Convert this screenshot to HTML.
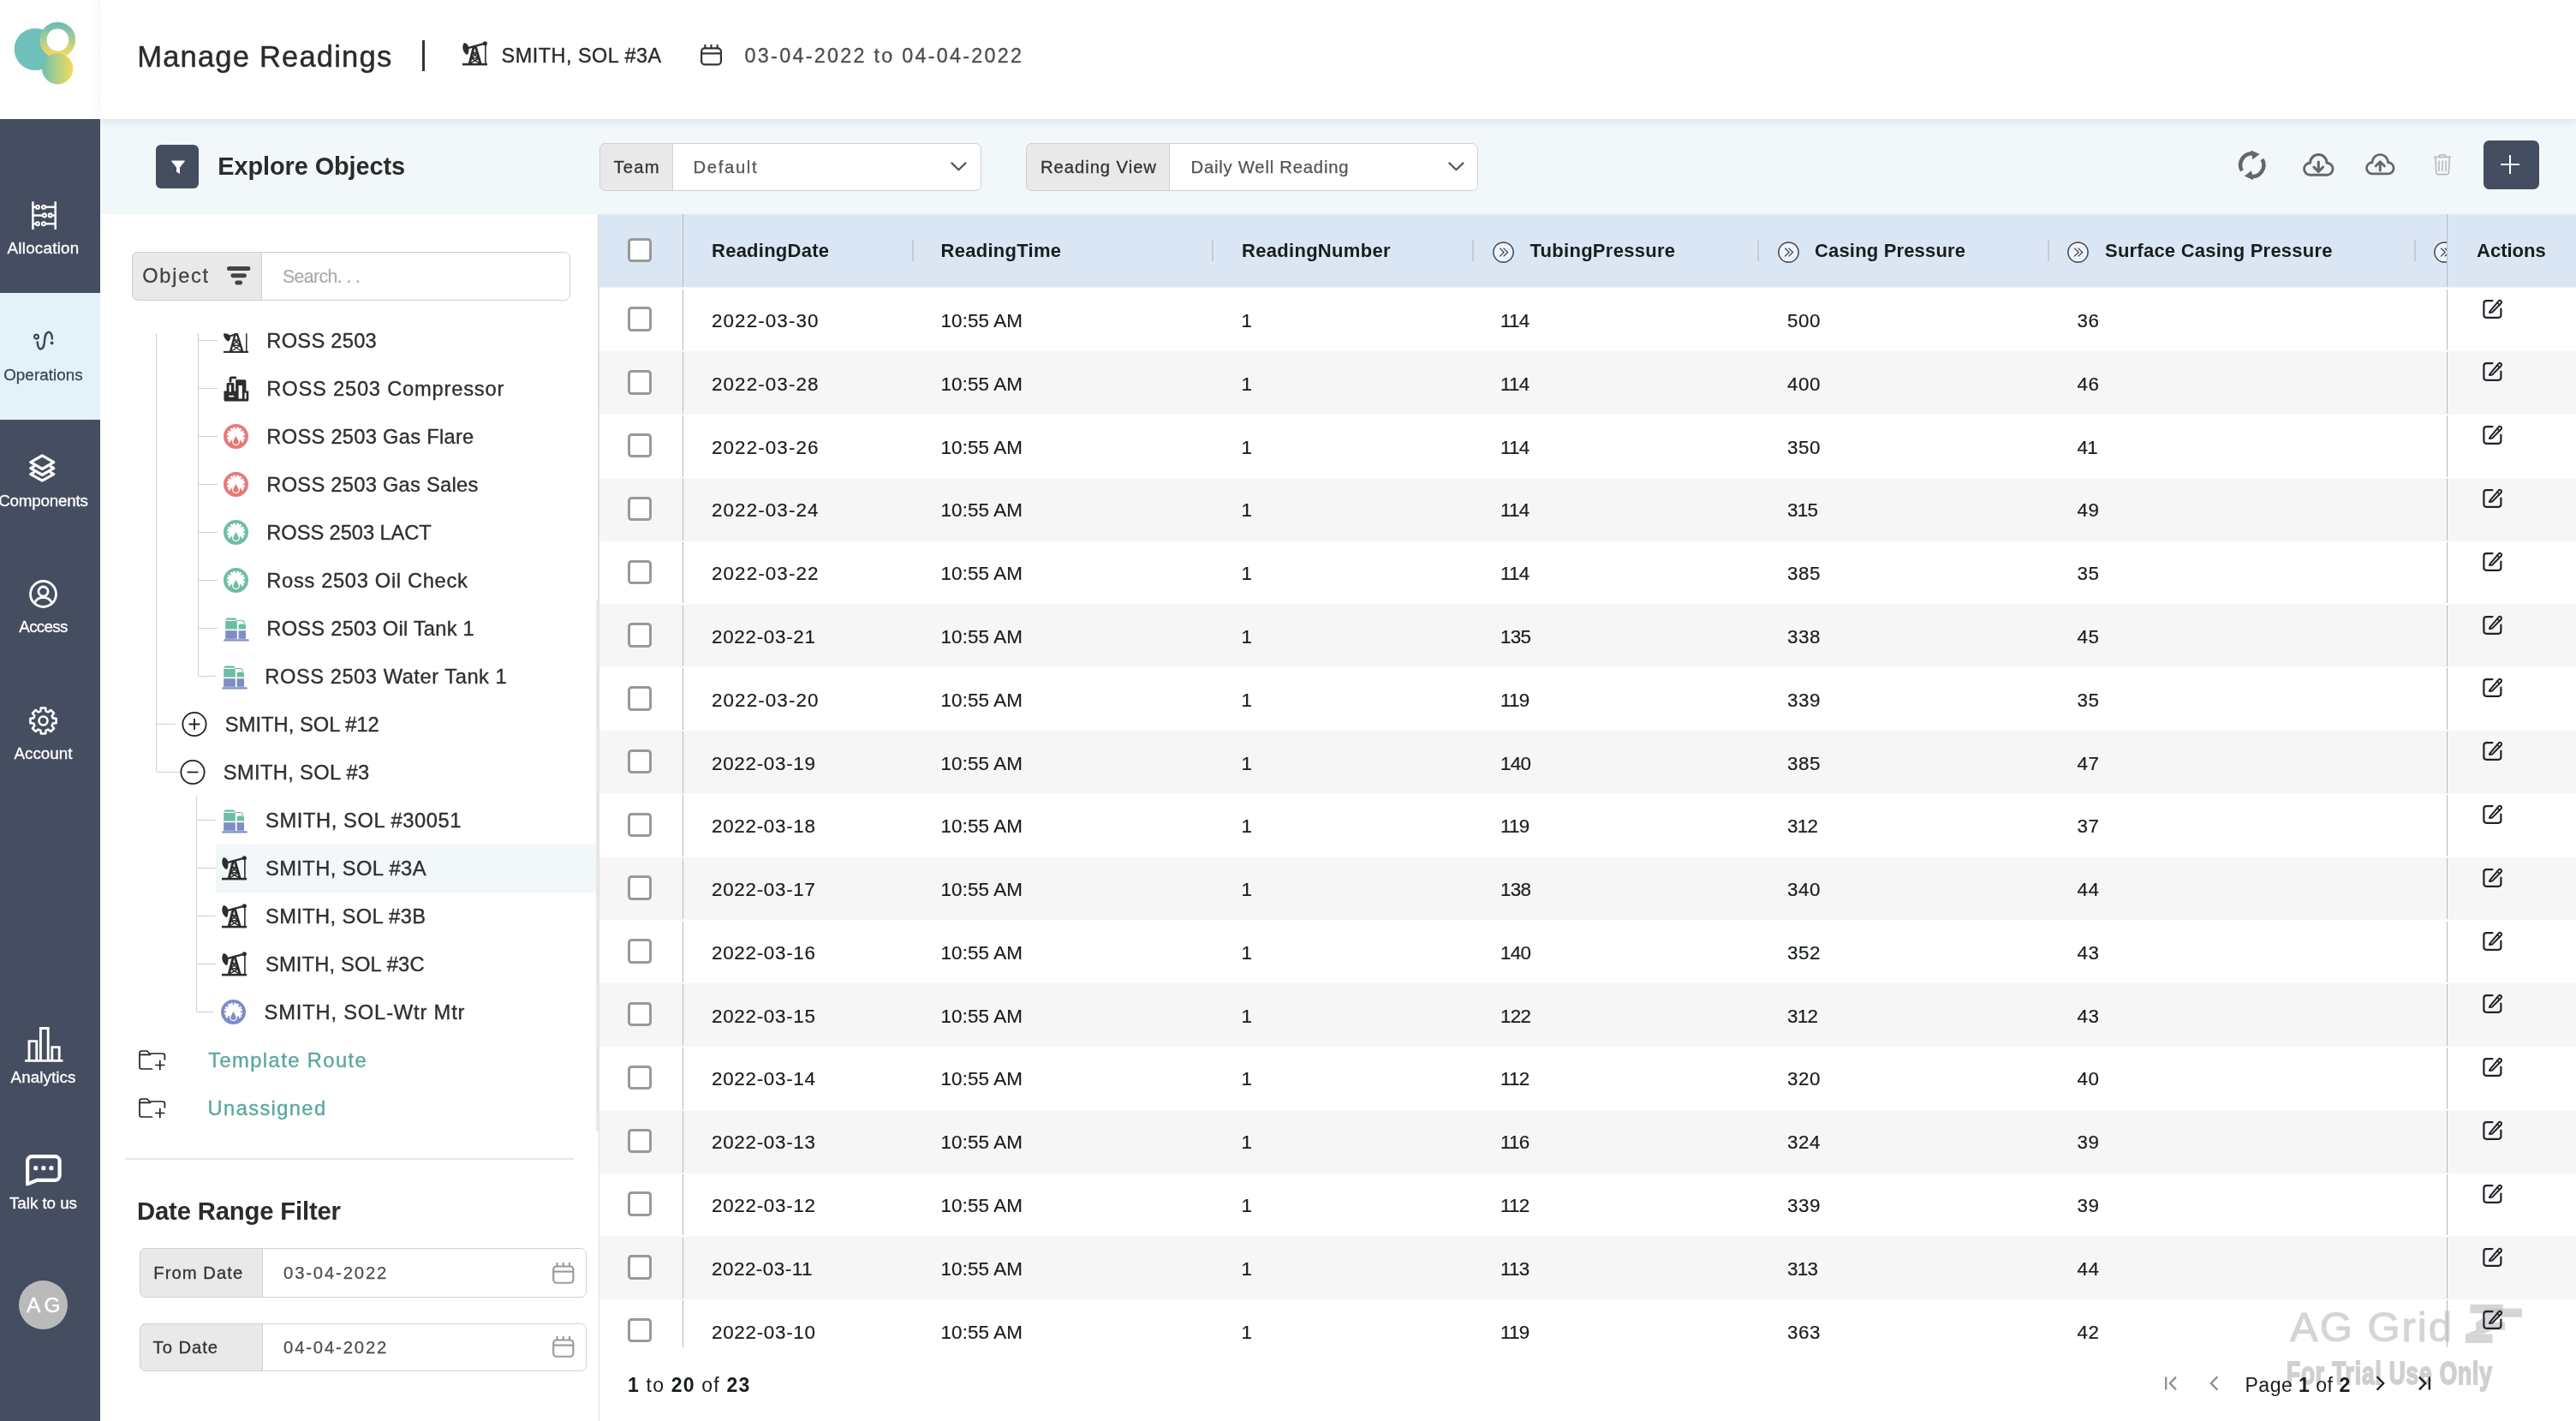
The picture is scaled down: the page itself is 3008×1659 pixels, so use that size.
<!DOCTYPE html>
<html><head><meta charset="utf-8"><title>Manage Readings</title>
<style>
html,body{margin:0;padding:0;background:#fff}
body{width:3008px;height:1659px;position:relative;overflow:hidden;font-family:"Liberation Sans",sans-serif}
.t{position:absolute;white-space:nowrap;font-family:"Liberation Sans",sans-serif}
.b{position:absolute}
#root{position:absolute;left:0;top:0;width:3008px;height:1659px;will-change:transform}
</style></head><body><div id="root">
<div class="b" style="left:0px;top:0px;width:3008px;height:1659px;background:#fff;"></div>
<div class="b" style="left:117px;top:139px;width:2891px;height:110.6px;background:#f2f7fa;"></div>
<div class="b" style="left:117px;top:0px;width:2891px;height:139px;background:#fff;box-shadow:0 3px 9px rgba(70,85,100,.125);"></div>
<div class="b" style="left:117px;top:249.6px;width:581px;height:1409.4px;background:#fff;"></div>
<div class="b" style="left:0px;top:139px;width:117px;height:1520px;background:#454d60;"></div>
<div class="b" style="left:0px;top:0px;width:117px;height:139px;background:linear-gradient(90deg,#fff 0,#fff 91%,#f9f9f9 100%);"></div>
<div class="b" style="left:0px;top:342.1px;width:117px;height:147.8px;background:#e3f2f9;"></div>
<svg style="position:absolute;left:0;top:0" width="117" height="139" viewBox="0 0 117 139"><defs><linearGradient id="lg1" x1="0" y1="0" x2="0" y2="1"><stop offset="0" stop-color="#6fc0b4"/><stop offset=".45" stop-color="#a5cc94"/><stop offset="1" stop-color="#f3da5e"/></linearGradient><linearGradient id="lg2" x1="0" y1="0" x2="1" y2="0"><stop offset="0" stop-color="#6fc0b0"/><stop offset=".5" stop-color="#b3cf88"/><stop offset="1" stop-color="#f5da5a"/></linearGradient></defs><circle cx="41.3" cy="57.5" r="24.6" fill="#70c0bb"/><circle cx="67.3" cy="46.6" r="16.9" fill="none" stroke="url(#lg1)" stroke-width="8"/><circle cx="67.3" cy="46.6" r="12.9" fill="#fff"/><circle cx="67.2" cy="80.3" r="18.1" fill="url(#lg2)"/></svg>
<span id="t1" class="t" style="left:160.20px;top:49.31px;font-size:34.6px;line-height:34.6px;color:#2b2b2b;letter-spacing:1.166px;-webkit-text-stroke:0.45px #2b2b2b;">Manage Readings</span>
<div class="b" style="left:493px;top:46.7px;width:3px;height:36.2px;background:#333;"></div>
<svg style="position:absolute;left:540.1px;top:48.4px;overflow:visible" width="29" height="28.5" viewBox="0 0 29 28.5" ><g fill="none" stroke="#2d2d2d"><path d="M0 27.1H29" stroke-width="2.6"/><path d="M26.9 3V27" stroke-width="1.6"/><path d="M4.5 8.6L26.5 2.7" stroke-width="2.4"/><path d="M8.2 26.6L13.2 6.6H15.4L21.2 26.6" stroke-width="2.9" stroke-linejoin="miter"/><path d="M11.6 13.6H17.4M10.2 19.8H19.2M11.6 13.6L19.2 19.8M17.4 13.6L10.2 19.8M10.2 19.8L20.4 26.2M19.2 19.8L9 26.2" stroke-width="1.5"/></g><circle cx="26.4" cy="2.7" r="2.5" fill="#2d2d2d"/><path d="M2 2C4.6 2.2 6.6 4 7.2 6.8C7.8 9.6 7.4 12.4 6.8 14.8L5 16C2.2 14 0.2 10.8 0.3 7.2C0.4 4.8 1 3.2 2 2Z" fill="#2d2d2d"/></svg>
<span id="t2" class="t" style="left:585.60px;top:53.59px;font-size:23.4px;line-height:23.4px;color:#2a2a2a;letter-spacing:0.513px;-webkit-text-stroke:0.35px #2a2a2a;">SMITH, SOL #3A</span>
<svg style="position:absolute;left:817.6px;top:52.2px;overflow:visible" width="25" height="24.5" viewBox="0 0 25 24.5" ><g fill="none" stroke="#333" stroke-width="2.2" stroke-linecap="round"><rect x="1.1" y="4.4" width="22.8" height="19" rx="3.6"/><path d="M1.1 10.4H23.9" stroke-linecap="butt"/><path d="M5.4 .9V4M12.5 .9V4M19.6 .9V4"/></g></svg>
<span id="t3" class="t" style="left:869.60px;top:53.59px;font-size:23.4px;line-height:23.4px;color:#4d4d4d;letter-spacing:2.247px;-webkit-text-stroke:0.3px #4d4d4d;">03-04-2022 to 04-04-2022</span>
<svg style="position:absolute;left:37px;top:234.7px;overflow:visible" width="29" height="33" viewBox="0 0 29 33" ><g fill="none" stroke="#fff" stroke-width="2.5"><path d="M1.4 .2V33.1M27.7 .2V33.1"/><path d="M1.4 6.8H4M17 6.8H27.7M1.4 16.4H12M24.6 16.4H27.7M1.4 26.2H4M17 26.2H27.7"/><g stroke-width="2.1"><circle cx="6.9" cy="6.8" r="2"/><circle cx="14" cy="6.8" r="2"/><circle cx="14.9" cy="16.4" r="2"/><circle cx="21.7" cy="16.4" r="2"/><circle cx="6.9" cy="26.2" r="2"/><circle cx="14" cy="26.2" r="2"/></g></g></svg>
<span id="t4" class="t" style="left:50.50px;top:281.29px;font-size:18.8px;line-height:18.8px;color:#fff;letter-spacing:0.240px;transform:translateX(-50%);-webkit-text-stroke:0.3px #fff;">Allocation</span>
<svg style="position:absolute;left:39px;top:386px;overflow:visible" width="24" height="23" viewBox="0 0 24 23" ><g fill="none" stroke="#3c4559" stroke-width="2.4" stroke-linecap="butt"><circle cx="3.5" cy="7.1" r="2.45" stroke-width="2.2"/><path d="M4.7 12.4C4.4 24.6 12.4 24.6 13 12C13.6 -1.5 22.2 -1.5 22 10.6"/></g><circle cx="21.6" cy="14.4" r="1.9" fill="#3c4559"/></svg>
<span id="t5" class="t" style="left:50.50px;top:428.69px;font-size:18.8px;line-height:18.8px;color:#3c4559;letter-spacing:0.081px;transform:translateX(-50%);-webkit-text-stroke:0.3px #3c4559;">Operations</span>
<svg style="position:absolute;left:33.9px;top:529.9px;overflow:visible" width="30.6" height="33" viewBox="0 0 30.6 33" ><g fill="none" stroke="#fff" stroke-width="3.2" stroke-linejoin="round" stroke-linecap="round"><path d="M15.3 1.8L28.8 9.6L15.3 17.5L1.8 9.6Z"/><path d="M5.4 14.7L1.8 16.7L15.3 24.5L28.8 16.7L25.2 14.7"/><path d="M5.4 21.7L1.8 23.7L15.3 31.2L28.8 23.7L25.2 21.7"/></g></svg>
<span id="t6" class="t" style="left:50.50px;top:575.79px;font-size:18.8px;line-height:18.8px;color:#fff;letter-spacing:-0.200px;transform:translateX(-50%);-webkit-text-stroke:0.3px #fff;">Components</span>
<svg style="position:absolute;left:34.2px;top:677.2px;overflow:visible" width="33" height="33" viewBox="0 0 33 33" ><g fill="none" stroke="#fff" stroke-width="2.8"><circle cx="16.5" cy="16.5" r="15"/><circle cx="16.5" cy="13.6" r="5.6"/><path d="M6.2 27.2C8.2 22.6 12 20.6 16.5 20.6S24.8 22.6 26.8 27.2" stroke-linecap="round"/></g></svg>
<span id="t7" class="t" style="left:50.50px;top:723.29px;font-size:18.8px;line-height:18.8px;color:#fff;letter-spacing:-0.700px;transform:translateX(-50%);-webkit-text-stroke:0.3px #fff;">Access</span>
<svg style="position:absolute;left:34.2px;top:825px;overflow:visible" width="33" height="33" viewBox="0 0 33 33" ><g fill="none" stroke="#fff" stroke-width="2.6" stroke-linejoin="round"><path d="M27.66 13.35 L31.57 13.87 L31.57 19.13 L27.66 19.65 L26.62 22.17 L29.02 25.30 L25.30 29.02 L22.17 26.62 L19.65 27.66 L19.13 31.57 L13.87 31.57 L13.35 27.66 L10.83 26.62 L7.70 29.02 L3.98 25.30 L6.38 22.17 L5.34 19.65 L1.43 19.13 L1.43 13.87 L5.34 13.35 L6.38 10.83 L3.98 7.70 L7.70 3.98 L10.83 6.38 L13.35 5.34 L13.87 1.43 L19.13 1.43 L19.65 5.34 L22.17 6.38 L25.30 3.98 L29.02 7.70 L26.62 10.83Z"/><circle cx="16.5" cy="16.5" r="5"/></g></svg>
<span id="t8" class="t" style="left:50.50px;top:870.79px;font-size:18.8px;line-height:18.8px;color:#fff;letter-spacing:0.004px;transform:translateX(-50%);-webkit-text-stroke:0.3px #fff;">Account</span>
<svg style="position:absolute;left:28.6px;top:1199.4px;overflow:visible" width="44.5" height="41" viewBox="0 0 44.5 41" ><g fill="none" stroke="#fff" stroke-width="2.9"><path d="M0 39.4H44.5"/><path d="M5 39.4V16.6H13.8V39.4M18.4 39.4V1.5H27.2V39.4M31.8 39.4V23.6H40.2V39.4"/></g></svg>
<span id="t9" class="t" style="left:50.50px;top:1248.99px;font-size:18.8px;line-height:18.8px;color:#fff;letter-spacing:0.080px;transform:translateX(-50%);-webkit-text-stroke:0.3px #fff;">Analytics</span>
<svg style="position:absolute;left:30px;top:1348px;overflow:visible" width="42" height="37" viewBox="0 0 42 37" ><path d="M7.5 2.1H34.2a5.4 5.4 0 0 1 5.4 5.4V24.4a5.4 5.4 0 0 1 -5.4 5.4H13.6L2.1 34.4V7.5a5.4 5.4 0 0 1 5.4-5.4Z" fill="none" stroke="#fff" stroke-width="4.2" stroke-linejoin="round"/><circle cx="11.7" cy="15.7" r="2.6" fill="#fff"/><circle cx="20.8" cy="15.7" r="2.6" fill="#fff"/><circle cx="29.9" cy="15.7" r="2.6" fill="#fff"/></svg>
<span id="t10" class="t" style="left:50.50px;top:1395.79px;font-size:18.8px;line-height:18.8px;color:#fff;letter-spacing:-0.038px;transform:translateX(-50%);-webkit-text-stroke:0.3px #fff;">Talk to us</span>
<div class="b" style="left:22px;top:1495.2px;width:57.2px;height:57.2px;background:#bababa;border-radius:50%;"></div>
<span id="t11" class="t" style="left:50.50px;top:1511.98px;font-size:24.6px;line-height:24.6px;color:#fff;letter-spacing:-0.700px;transform:translateX(-50%);-webkit-text-stroke:0.4px #fff;">A G</span>
<div class="b" style="left:182px;top:169.2px;width:50px;height:50.8px;background:#454d60;border-radius:6px;"></div>
<svg style="position:absolute;left:200.2px;top:187px;overflow:visible" width="16" height="16.4" viewBox="0 0 16 16.4" ><path d="M.6 .4H15.4a.5 .5 0 0 1 .4.8L10 8.6V16L6 13.6V8.6L.2 1.2A.5 .5 0 0 1 .6 .4Z" fill="#fff"/></svg>
<span id="t12" class="t" style="left:254.20px;top:179.94px;font-size:28.9px;line-height:28.9px;color:#2b2b2b;font-weight:700;letter-spacing:-0.069px;">Explore Objects</span>
<div class="b" style="left:700px;top:166.5px;width:445.5px;height:56px;background:#fff;border:1px solid #cfd2d6;border-radius:7px;box-sizing:border-box;"></div>
<div class="b" style="left:700px;top:166.5px;width:85.5px;height:56px;background:#e9e9e9;border:1px solid #cfd2d6;border-radius:7px 0 0 7px;box-sizing:border-box;"></div>
<span id="t13" class="t" style="left:716.60px;top:184.62px;font-size:20.3px;line-height:20.3px;color:#333;letter-spacing:1.135px;-webkit-text-stroke:0.3px #333;">Team</span>
<span id="t14" class="t" style="left:809.60px;top:184.62px;font-size:20.3px;line-height:20.3px;color:#555;letter-spacing:1.622px;-webkit-text-stroke:0.25px #555;">Default</span>
<svg style="position:absolute;left:1110.3px;top:189.2px;overflow:visible" width="18.8" height="10.8" viewBox="0 0 21 12" ><path d="M1.5 1.5L10.5 10.3L19.5 1.5" fill="none" stroke="#555" stroke-width="2.4" stroke-linecap="round" stroke-linejoin="round"/></svg>
<div class="b" style="left:1197.5px;top:166.5px;width:528px;height:56px;background:#fff;border:1px solid #cfd2d6;border-radius:7px;box-sizing:border-box;"></div>
<div class="b" style="left:1197.5px;top:166.5px;width:168px;height:56px;background:#e9e9e9;border:1px solid #cfd2d6;border-radius:7px 0 0 7px;box-sizing:border-box;"></div>
<span id="t15" class="t" style="left:1215.00px;top:184.62px;font-size:20.3px;line-height:20.3px;color:#333;letter-spacing:0.929px;-webkit-text-stroke:0.3px #333;">Reading View</span>
<span id="t16" class="t" style="left:1390.50px;top:184.62px;font-size:20.3px;line-height:20.3px;color:#555;letter-spacing:0.767px;-webkit-text-stroke:0.25px #555;">Daily Well Reading</span>
<svg style="position:absolute;left:1690.6px;top:189.2px;overflow:visible" width="18.8" height="10.8" viewBox="0 0 21 12" ><path d="M1.5 1.5L10.5 10.3L19.5 1.5" fill="none" stroke="#555" stroke-width="2.4" stroke-linecap="round" stroke-linejoin="round"/></svg>
<svg style="position:absolute;left:2614.2px;top:175.1px;overflow:visible" width="31.4" height="35.4" viewBox="0 0 31.4 35.4" ><g fill="none" stroke="#666" stroke-width="4.5"><path d="M3.9 24.4A13.4 13.4 0 0 1 17.6 4.5"/><path d="M27.5 10.9A13.4 13.4 0 0 1 13.8 30.9"/></g><path d="M14.2 .2L24.6 5L16.4 11.2Z" fill="#666"/><path d="M17.2 35.2L6.8 30.4L15 24.2Z" fill="#666"/></svg>
<svg style="position:absolute;left:2689px;top:179.1px;overflow:visible" width="36.6" height="26.8" viewBox="0 0 36.6 26.8" ><g fill="none" stroke="#666" stroke-width="2.9" stroke-linecap="round" stroke-linejoin="round"><path d="M8.55 25.25A7 7 0 0 1 8.55 11.25A9.75 9.75 0 0 1 28.05 11.25A7 7 0 0 1 28.05 25.25Z"/><path d="M18.3 10V20.8M13 16.2L18.3 21.5L23.6 16.2" stroke-width="3.1"/></g></svg>
<svg style="position:absolute;left:2762.2px;top:178.6px;overflow:visible" width="34.6" height="25.5" viewBox="0 0 36.6 26.8" ><g fill="none" stroke="#666" stroke-width="2.9" stroke-linecap="round" stroke-linejoin="round"><path d="M8.55 25.25A7 7 0 0 1 8.55 11.25A9.75 9.75 0 0 1 28.05 11.25A7 7 0 0 1 28.05 25.25Z"/><path d="M18.3 21.4V10.8M13 15.6L18.3 10.3L23.6 15.6" stroke-width="3.1"/></g></svg>
<svg style="position:absolute;left:2841.8px;top:180.1px;overflow:visible" width="20.2" height="24.4" viewBox="0 0 20.2 24.4" ><g fill="none" stroke="#b8b8b8" stroke-width="1.6"><path d="M0 3.4H20.2"/><path d="M6.4 3.2V1.6A.9 .9 0 0 1 7.3 .7H12.9A.9 .9 0 0 1 13.8 1.6V3.2"/><path d="M1.9 3.6L2.8 22A1.8 1.8 0 0 0 4.6 23.6H15.6A1.8 1.8 0 0 0 17.4 22L18.3 3.6"/><path d="M6 7.4V20M10.1 7.4V20M14.2 7.4V20" stroke-width="1.5"/></g></svg>
<div class="b" style="left:2900px;top:164px;width:65.2px;height:56.8px;background:#454d60;border-radius:6.5px;"></div>
<div class="b" style="left:2920px;top:190.9px;width:22.4px;height:2.4px;background:#fff;"></div>
<div class="b" style="left:2930px;top:180.9px;width:2.4px;height:22.4px;background:#fff;"></div>
<div class="b" style="left:153.5px;top:293.5px;width:512.2px;height:57px;background:#fff;border:1px solid #cfcfcf;border-radius:7px;box-sizing:border-box;"></div>
<div class="b" style="left:153.5px;top:293.5px;width:152.2px;height:57px;background:#e9e9e9;border:1px solid #cfcfcf;border-radius:7px 0 0 7px;box-sizing:border-box;"></div>
<span id="t17" class="t" style="left:166.20px;top:311.22px;font-size:23.6px;line-height:23.6px;color:#444;letter-spacing:1.759px;-webkit-text-stroke:0.3px #444;">Object</span>
<svg style="position:absolute;left:265.4px;top:311.3px;overflow:visible" width="27.4" height="21.4" viewBox="0 0 27.4 21.4" ><g fill="#444"><rect x="0" y="0" width="27.4" height="5" rx="2.5"/><rect x="4.4" y="8.2" width="18.6" height="5" rx="2.5"/><rect x="9.4" y="16.4" width="8.6" height="5" rx="2.2"/></g></svg>
<span id="t18" class="t" style="left:330.00px;top:312.77px;font-size:21.3px;line-height:21.3px;color:#aaa;letter-spacing:-0.608px;-webkit-text-stroke:0.2px #aaa;">Search. . .</span>
<div class="b" style="left:252px;top:986.1px;width:444.5px;height:56.2px;background:#f2f7fa;"></div>
<div class="b" style="left:181.9px;top:389px;width:1.2px;height:512.4px;background:#d0d0d0;"></div>
<div class="b" style="left:230.9px;top:389px;width:1.2px;height:400.4px;background:#d0d0d0;"></div>
<div class="b" style="left:231.5px;top:396.79999999999995px;width:22.30000000000001px;height:1.2px;background:#d0d0d0;"></div>
<svg style="position:absolute;left:260.9px;top:388.79999999999995px;overflow:visible" width="29" height="23" viewBox="0 0 29 23" ><g fill="none" stroke="#2d2d2d" stroke-linecap="butt"><path d="M0 21.9H29" stroke-width="2.1"/><path d="M26.8 0.3V22" stroke-width="1.5"/><path d="M8 21.6L13.6 1.2H16L22.2 21.6" stroke-width="2.4" stroke-linejoin="miter"/><path d="M12 7.8H17.8M10.4 14.2H19.8M12 7.8L19.8 14.2M17.8 7.8L10.4 14.2M10.4 14.2L21.4 21.2M19.8 14.2L8.6 21.2" stroke-width="1.35"/><path d="M4.6 4.2L15.4 0.9" stroke-width="2.1"/></g><path d="M0.1 0.4C3.6 0 6.6 1 7.6 3.2C8.5 5.2 8 7.2 6.6 8.6L5.4 9.8L2.6 7.2C0.9 5.4 0.1 3 0.1 0.4Z" fill="#2d2d2d"/></svg>
<span id="t19" class="t" style="left:311.30px;top:386.64px;font-size:23.7px;line-height:23.7px;color:#2f2f2f;letter-spacing:0.260px;-webkit-text-stroke:0.35px #2f2f2f;">ROSS 2503</span>
<div class="b" style="left:231.5px;top:452.79999999999995px;width:22.30000000000001px;height:1.2px;background:#d0d0d0;"></div>
<svg style="position:absolute;left:260.8px;top:438.7px;overflow:visible" width="29.5" height="29.5" viewBox="0 0 29.5 29.5" ><g fill="#2d2d2d"><path d="M0.5 17.6H3.6V9.2a1.2 1.2 0 0 1 1.2-1.2H11.2a1.2 1.2 0 0 1 1.2 1.2V17.6H29.3V28a1.4 1.4 0 0 1 -1.4 1.4H1.9A1.4 1.4 0 0 1 .5 28Z"/><path d="M14.2 4.2H24.6a1.8 1.8 0 0 1 1.8 1.8V18H14.2a0 0 0 0 1 0 0V4.2Z"/><path d="M6.6 7.6V3.4A3 3 0 0 1 9.6 .4H14a1 1 0 0 1 1 1V3.2H10.2a.8 .8 0 0 0 -.8.8V7.6Z"/></g><g fill="#fff"><rect x="6.6" y="10.5" width="2.3" height="8"/><rect x="17.6" y="11" width="4.2" height="15.5"/><rect x="24.6" y="19.6" width="2" height="7"/><rect x="6" y="22.8" width="6.4" height="1.6" rx=".8"/></g></svg>
<span id="t20" class="t" style="left:311.30px;top:442.64px;font-size:23.7px;line-height:23.7px;color:#2f2f2f;letter-spacing:0.789px;-webkit-text-stroke:0.35px #2f2f2f;">ROSS 2503 Compressor</span>
<div class="b" style="left:231.5px;top:508.79999999999995px;width:22.30000000000001px;height:1.2px;background:#d0d0d0;"></div>
<svg style="position:absolute;left:261.0px;top:494.9px;overflow:visible" width="29" height="29" viewBox="0 0 29 29" ><circle cx="14.5" cy="14.5" r="14.45" fill="#e87878"/><circle cx="14.5" cy="14.3" r="10.7" fill="#fff"/><path d="M3.30 14.30L6.10 14.30" stroke="#e87878" stroke-width="1.7"/><path d="M6.58 6.38L8.56 8.36" stroke="#e87878" stroke-width="1.7"/><path d="M14.50 3.10L14.50 5.90" stroke="#e87878" stroke-width="1.7"/><path d="M22.42 6.38L20.44 8.36" stroke="#e87878" stroke-width="1.7"/><path d="M25.70 14.30L22.90 14.30" stroke="#e87878" stroke-width="1.7"/><path d="M4.15 10.01L5.54 10.59" stroke="#e87878" stroke-width="1.3"/><path d="M10.21 3.95L10.79 5.34" stroke="#e87878" stroke-width="1.3"/><path d="M18.79 3.95L18.21 5.34" stroke="#e87878" stroke-width="1.3"/><path d="M24.85 10.01L23.46 10.59" stroke="#e87878" stroke-width="1.3"/><path d="M4.15 18.59L5.54 18.01" stroke="#e87878" stroke-width="1.3"/><path d="M24.85 18.59L23.46 18.01" stroke="#e87878" stroke-width="1.3"/><path d="M6.6 24L8.3 19.7L9.2 18.9L10 19.4L10.4 20.8H18.6L19 19.4L19.8 18.9L20.7 19.7L22.4 24L14.5 27Z" fill="#e87878"/><path d="M10.55 20.6A3.95 3.95 0 0 0 18.45 20.6" fill="none" stroke="#fff" stroke-width="1.25"/><path d="M14.5 14C15.7 16.4 17.45 18.5 17.45 20.5A2.95 2.95 0 0 1 11.55 20.5C11.55 18.5 13.3 16.4 14.5 14Z" fill="#e87878"/></svg>
<span id="t21" class="t" style="left:311.30px;top:498.64px;font-size:23.7px;line-height:23.7px;color:#2f2f2f;letter-spacing:0.279px;-webkit-text-stroke:0.35px #2f2f2f;">ROSS 2503 Gas Flare</span>
<div class="b" style="left:231.5px;top:564.8px;width:22.30000000000001px;height:1.2px;background:#d0d0d0;"></div>
<svg style="position:absolute;left:261.0px;top:550.9px;overflow:visible" width="29" height="29" viewBox="0 0 29 29" ><circle cx="14.5" cy="14.5" r="14.45" fill="#e87878"/><circle cx="14.5" cy="14.3" r="10.7" fill="#fff"/><path d="M3.30 14.30L6.10 14.30" stroke="#e87878" stroke-width="1.7"/><path d="M6.58 6.38L8.56 8.36" stroke="#e87878" stroke-width="1.7"/><path d="M14.50 3.10L14.50 5.90" stroke="#e87878" stroke-width="1.7"/><path d="M22.42 6.38L20.44 8.36" stroke="#e87878" stroke-width="1.7"/><path d="M25.70 14.30L22.90 14.30" stroke="#e87878" stroke-width="1.7"/><path d="M4.15 10.01L5.54 10.59" stroke="#e87878" stroke-width="1.3"/><path d="M10.21 3.95L10.79 5.34" stroke="#e87878" stroke-width="1.3"/><path d="M18.79 3.95L18.21 5.34" stroke="#e87878" stroke-width="1.3"/><path d="M24.85 10.01L23.46 10.59" stroke="#e87878" stroke-width="1.3"/><path d="M4.15 18.59L5.54 18.01" stroke="#e87878" stroke-width="1.3"/><path d="M24.85 18.59L23.46 18.01" stroke="#e87878" stroke-width="1.3"/><path d="M6.6 24L8.3 19.7L9.2 18.9L10 19.4L10.4 20.8H18.6L19 19.4L19.8 18.9L20.7 19.7L22.4 24L14.5 27Z" fill="#e87878"/><path d="M10.55 20.6A3.95 3.95 0 0 0 18.45 20.6" fill="none" stroke="#fff" stroke-width="1.25"/><path d="M14.5 14C15.7 16.4 17.45 18.5 17.45 20.5A2.95 2.95 0 0 1 11.55 20.5C11.55 18.5 13.3 16.4 14.5 14Z" fill="#e87878"/></svg>
<span id="t22" class="t" style="left:311.30px;top:554.64px;font-size:23.7px;line-height:23.7px;color:#2f2f2f;letter-spacing:0.263px;-webkit-text-stroke:0.35px #2f2f2f;">ROSS 2503 Gas Sales</span>
<div class="b" style="left:231.5px;top:620.8px;width:22.30000000000001px;height:1.2px;background:#d0d0d0;"></div>
<svg style="position:absolute;left:261.0px;top:606.9px;overflow:visible" width="29" height="29" viewBox="0 0 29 29" ><circle cx="14.5" cy="14.5" r="14.45" fill="#6dbda4"/><circle cx="14.5" cy="14.3" r="10.7" fill="#fff"/><path d="M3.30 14.30L6.10 14.30" stroke="#6dbda4" stroke-width="1.7"/><path d="M6.58 6.38L8.56 8.36" stroke="#6dbda4" stroke-width="1.7"/><path d="M14.50 3.10L14.50 5.90" stroke="#6dbda4" stroke-width="1.7"/><path d="M22.42 6.38L20.44 8.36" stroke="#6dbda4" stroke-width="1.7"/><path d="M25.70 14.30L22.90 14.30" stroke="#6dbda4" stroke-width="1.7"/><path d="M4.15 10.01L5.54 10.59" stroke="#6dbda4" stroke-width="1.3"/><path d="M10.21 3.95L10.79 5.34" stroke="#6dbda4" stroke-width="1.3"/><path d="M18.79 3.95L18.21 5.34" stroke="#6dbda4" stroke-width="1.3"/><path d="M24.85 10.01L23.46 10.59" stroke="#6dbda4" stroke-width="1.3"/><path d="M4.15 18.59L5.54 18.01" stroke="#6dbda4" stroke-width="1.3"/><path d="M24.85 18.59L23.46 18.01" stroke="#6dbda4" stroke-width="1.3"/><path d="M6.6 24L8.3 19.7L9.2 18.9L10 19.4L10.4 20.8H18.6L19 19.4L19.8 18.9L20.7 19.7L22.4 24L14.5 27Z" fill="#6dbda4"/><path d="M10.55 20.6A3.95 3.95 0 0 0 18.45 20.6" fill="none" stroke="#fff" stroke-width="1.25"/><path d="M14.5 14C15.7 16.4 17.45 18.5 17.45 20.5A2.95 2.95 0 0 1 11.55 20.5C11.55 18.5 13.3 16.4 14.5 14Z" fill="#6dbda4"/></svg>
<span id="t23" class="t" style="left:311.30px;top:610.64px;font-size:23.7px;line-height:23.7px;color:#2f2f2f;letter-spacing:-0.081px;-webkit-text-stroke:0.35px #2f2f2f;">ROSS 2503 LACT</span>
<div class="b" style="left:231.5px;top:676.8px;width:22.30000000000001px;height:1.2px;background:#d0d0d0;"></div>
<svg style="position:absolute;left:261.0px;top:662.9px;overflow:visible" width="29" height="29" viewBox="0 0 29 29" ><circle cx="14.5" cy="14.5" r="14.45" fill="#6dbda4"/><circle cx="14.5" cy="14.3" r="10.7" fill="#fff"/><path d="M3.30 14.30L6.10 14.30" stroke="#6dbda4" stroke-width="1.7"/><path d="M6.58 6.38L8.56 8.36" stroke="#6dbda4" stroke-width="1.7"/><path d="M14.50 3.10L14.50 5.90" stroke="#6dbda4" stroke-width="1.7"/><path d="M22.42 6.38L20.44 8.36" stroke="#6dbda4" stroke-width="1.7"/><path d="M25.70 14.30L22.90 14.30" stroke="#6dbda4" stroke-width="1.7"/><path d="M4.15 10.01L5.54 10.59" stroke="#6dbda4" stroke-width="1.3"/><path d="M10.21 3.95L10.79 5.34" stroke="#6dbda4" stroke-width="1.3"/><path d="M18.79 3.95L18.21 5.34" stroke="#6dbda4" stroke-width="1.3"/><path d="M24.85 10.01L23.46 10.59" stroke="#6dbda4" stroke-width="1.3"/><path d="M4.15 18.59L5.54 18.01" stroke="#6dbda4" stroke-width="1.3"/><path d="M24.85 18.59L23.46 18.01" stroke="#6dbda4" stroke-width="1.3"/><path d="M6.6 24L8.3 19.7L9.2 18.9L10 19.4L10.4 20.8H18.6L19 19.4L19.8 18.9L20.7 19.7L22.4 24L14.5 27Z" fill="#6dbda4"/><path d="M10.55 20.6A3.95 3.95 0 0 0 18.45 20.6" fill="none" stroke="#fff" stroke-width="1.25"/><path d="M14.5 14C15.7 16.4 17.45 18.5 17.45 20.5A2.95 2.95 0 0 1 11.55 20.5C11.55 18.5 13.3 16.4 14.5 14Z" fill="#6dbda4"/></svg>
<span id="t24" class="t" style="left:311.30px;top:666.64px;font-size:23.7px;line-height:23.7px;color:#2f2f2f;letter-spacing:0.667px;-webkit-text-stroke:0.35px #2f2f2f;">Ross 2503 Oil Check</span>
<div class="b" style="left:231.5px;top:732.8px;width:22.30000000000001px;height:1.2px;background:#d0d0d0;"></div>
<svg style="position:absolute;left:260.5px;top:720.9px;overflow:visible" width="30" height="27.5" viewBox="0 0 30 27.5" ><g fill="#6dbda4"><path d="M2.6 2.2a1.8 1.8 0 0 1 1.8-1.8H13.4a1.8 1.8 0 0 1 1.8 1.8V2.8H2.6Z"/><rect x="2.2" y="4" width="13.6" height="9.6"/><path d="M17.6 13.6V9.4a2 2 0 0 1 2-2H24a2 2 0 0 1 2 2V13.6Z"/><path d="M15.2 3H21.5a3.2 3.2 0 0 1 3.2 3.2V7.6H23.6V6.2a2.1 2.1 0 0 0 -2.1-2.1H15.2Z"/></g><g fill="#7f8dc6"><rect x="2.2" y="15.2" width="13.6" height="9.6"/><rect x="17.6" y="15.2" width="8.4" height="9.6"/><path d="M.2 26.6a1.4 1.4 0 0 1 1.4-1.4H28.4a1.4 1.4 0 0 1 1.4 1.4V27.4H.2Z"/></g></svg>
<span id="t25" class="t" style="left:311.30px;top:722.64px;font-size:23.7px;line-height:23.7px;color:#2f2f2f;letter-spacing:0.243px;-webkit-text-stroke:0.35px #2f2f2f;">ROSS 2503 Oil Tank 1</span>
<div class="b" style="left:231.5px;top:788.8px;width:20.30000000000001px;height:1.2px;background:#d0d0d0;"></div>
<svg style="position:absolute;left:258.5px;top:776.9px;overflow:visible" width="30" height="27.5" viewBox="0 0 30 27.5" ><g fill="#6dbda4"><path d="M2.6 2.2a1.8 1.8 0 0 1 1.8-1.8H13.4a1.8 1.8 0 0 1 1.8 1.8V2.8H2.6Z"/><rect x="2.2" y="4" width="13.6" height="9.6"/><path d="M17.6 13.6V9.4a2 2 0 0 1 2-2H24a2 2 0 0 1 2 2V13.6Z"/><path d="M15.2 3H21.5a3.2 3.2 0 0 1 3.2 3.2V7.6H23.6V6.2a2.1 2.1 0 0 0 -2.1-2.1H15.2Z"/></g><g fill="#7f8dc6"><rect x="2.2" y="15.2" width="13.6" height="9.6"/><rect x="17.6" y="15.2" width="8.4" height="9.6"/><path d="M.2 26.6a1.4 1.4 0 0 1 1.4-1.4H28.4a1.4 1.4 0 0 1 1.4 1.4V27.4H.2Z"/></g></svg>
<span id="t26" class="t" style="left:309.30px;top:778.64px;font-size:23.7px;line-height:23.7px;color:#2f2f2f;letter-spacing:0.536px;-webkit-text-stroke:0.35px #2f2f2f;">ROSS 2503 Water Tank 1</span>
<div class="b" style="left:182.5px;top:844.8px;width:22.5px;height:1.2px;background:#d0d0d0;"></div>
<svg style="position:absolute;left:211.5px;top:830.4px;overflow:visible" width="30" height="30" viewBox="0 0 30 30" ><circle cx="15" cy="15.5" r="13.65" fill="#fff" stroke="#222" stroke-width="1.8"/><path d="M8.6 15.5H21.4M15 9.1V21.9" stroke="#222" stroke-width="1.8" fill="none"/></svg>
<span id="t27" class="t" style="left:262.80px;top:834.64px;font-size:23.7px;line-height:23.7px;color:#2f2f2f;letter-spacing:0.040px;-webkit-text-stroke:0.35px #2f2f2f;">SMITH, SOL #12</span>
<div class="b" style="left:182.5px;top:900.8px;width:28.5px;height:1.2px;background:#d0d0d0;"></div>
<svg style="position:absolute;left:210.2px;top:886.4px;overflow:visible" width="30" height="30" viewBox="0 0 30 30" ><circle cx="15" cy="15.5" r="13.65" fill="#fff" stroke="#222" stroke-width="1.8"/><path d="M8.6 15.5H21.4" stroke="#222" stroke-width="1.8" fill="none"/></svg>
<span id="t28" class="t" style="left:260.80px;top:890.64px;font-size:23.7px;line-height:23.7px;color:#2f2f2f;letter-spacing:0.349px;-webkit-text-stroke:0.35px #2f2f2f;">SMITH, SOL #3</span>
<div class="b" style="left:228.9px;top:930px;width:1.2px;height:251.4000000000001px;background:#d0d0d0;"></div>
<div class="b" style="left:229.5px;top:956.8px;width:22.30000000000001px;height:1.2px;background:#d0d0d0;"></div>
<svg style="position:absolute;left:258.5px;top:944.9px;overflow:visible" width="30" height="27.5" viewBox="0 0 30 27.5" ><g fill="#6dbda4"><path d="M2.6 2.2a1.8 1.8 0 0 1 1.8-1.8H13.4a1.8 1.8 0 0 1 1.8 1.8V2.8H2.6Z"/><rect x="2.2" y="4" width="13.6" height="9.6"/><path d="M17.6 13.6V9.4a2 2 0 0 1 2-2H24a2 2 0 0 1 2 2V13.6Z"/><path d="M15.2 3H21.5a3.2 3.2 0 0 1 3.2 3.2V7.6H23.6V6.2a2.1 2.1 0 0 0 -2.1-2.1H15.2Z"/></g><g fill="#7f8dc6"><rect x="2.2" y="15.2" width="13.6" height="9.6"/><rect x="17.6" y="15.2" width="8.4" height="9.6"/><path d="M.2 26.6a1.4 1.4 0 0 1 1.4-1.4H28.4a1.4 1.4 0 0 1 1.4 1.4V27.4H.2Z"/></g></svg>
<span id="t29" class="t" style="left:310.00px;top:946.64px;font-size:23.7px;line-height:23.7px;color:#2f2f2f;letter-spacing:0.594px;-webkit-text-stroke:0.35px #2f2f2f;">SMITH, SOL #30051</span>
<div class="b" style="left:229.5px;top:1012.8px;width:22.30000000000001px;height:1.2px;background:#d0d0d0;"></div>
<svg style="position:absolute;left:259.0px;top:998.8px;overflow:visible" width="29" height="28.5" viewBox="0 0 29 28.5" ><g fill="none" stroke="#2d2d2d"><path d="M0 27.1H29" stroke-width="2.6"/><path d="M26.9 3V27" stroke-width="1.6"/><path d="M4.5 8.6L26.5 2.7" stroke-width="2.4"/><path d="M8.2 26.6L13.2 6.6H15.4L21.2 26.6" stroke-width="2.9" stroke-linejoin="miter"/><path d="M11.6 13.6H17.4M10.2 19.8H19.2M11.6 13.6L19.2 19.8M17.4 13.6L10.2 19.8M10.2 19.8L20.4 26.2M19.2 19.8L9 26.2" stroke-width="1.5"/></g><circle cx="26.4" cy="2.7" r="2.5" fill="#2d2d2d"/><path d="M2 2C4.6 2.2 6.6 4 7.2 6.8C7.8 9.6 7.4 12.4 6.8 14.8L5 16C2.2 14 0.2 10.8 0.3 7.2C0.4 4.8 1 3.2 2 2Z" fill="#2d2d2d"/></svg>
<span id="t30" class="t" style="left:310.00px;top:1002.64px;font-size:23.7px;line-height:23.7px;color:#2f2f2f;letter-spacing:0.415px;-webkit-text-stroke:0.35px #2f2f2f;">SMITH, SOL #3A</span>
<div class="b" style="left:229.5px;top:1068.8000000000002px;width:22.30000000000001px;height:1.2px;background:#d0d0d0;"></div>
<svg style="position:absolute;left:259.0px;top:1054.8000000000002px;overflow:visible" width="29" height="28.5" viewBox="0 0 29 28.5" ><g fill="none" stroke="#2d2d2d"><path d="M0 27.1H29" stroke-width="2.6"/><path d="M26.9 3V27" stroke-width="1.6"/><path d="M4.5 8.6L26.5 2.7" stroke-width="2.4"/><path d="M8.2 26.6L13.2 6.6H15.4L21.2 26.6" stroke-width="2.9" stroke-linejoin="miter"/><path d="M11.6 13.6H17.4M10.2 19.8H19.2M11.6 13.6L19.2 19.8M17.4 13.6L10.2 19.8M10.2 19.8L20.4 26.2M19.2 19.8L9 26.2" stroke-width="1.5"/></g><circle cx="26.4" cy="2.7" r="2.5" fill="#2d2d2d"/><path d="M2 2C4.6 2.2 6.6 4 7.2 6.8C7.8 9.6 7.4 12.4 6.8 14.8L5 16C2.2 14 0.2 10.8 0.3 7.2C0.4 4.8 1 3.2 2 2Z" fill="#2d2d2d"/></svg>
<span id="t31" class="t" style="left:310.00px;top:1058.64px;font-size:23.7px;line-height:23.7px;color:#2f2f2f;letter-spacing:0.376px;-webkit-text-stroke:0.35px #2f2f2f;">SMITH, SOL #3B</span>
<div class="b" style="left:229.5px;top:1124.8000000000002px;width:22.30000000000001px;height:1.2px;background:#d0d0d0;"></div>
<svg style="position:absolute;left:259.0px;top:1110.8000000000002px;overflow:visible" width="29" height="28.5" viewBox="0 0 29 28.5" ><g fill="none" stroke="#2d2d2d"><path d="M0 27.1H29" stroke-width="2.6"/><path d="M26.9 3V27" stroke-width="1.6"/><path d="M4.5 8.6L26.5 2.7" stroke-width="2.4"/><path d="M8.2 26.6L13.2 6.6H15.4L21.2 26.6" stroke-width="2.9" stroke-linejoin="miter"/><path d="M11.6 13.6H17.4M10.2 19.8H19.2M11.6 13.6L19.2 19.8M17.4 13.6L10.2 19.8M10.2 19.8L20.4 26.2M19.2 19.8L9 26.2" stroke-width="1.5"/></g><circle cx="26.4" cy="2.7" r="2.5" fill="#2d2d2d"/><path d="M2 2C4.6 2.2 6.6 4 7.2 6.8C7.8 9.6 7.4 12.4 6.8 14.8L5 16C2.2 14 0.2 10.8 0.3 7.2C0.4 4.8 1 3.2 2 2Z" fill="#2d2d2d"/></svg>
<span id="t32" class="t" style="left:310.00px;top:1114.64px;font-size:23.7px;line-height:23.7px;color:#2f2f2f;letter-spacing:0.161px;-webkit-text-stroke:0.35px #2f2f2f;">SMITH, SOL #3C</span>
<div class="b" style="left:229.5px;top:1180.8000000000002px;width:20.80000000000001px;height:1.2px;background:#d0d0d0;"></div>
<svg style="position:absolute;left:257.5px;top:1166.9px;overflow:visible" width="29" height="29" viewBox="0 0 29 29" ><circle cx="14.5" cy="14.5" r="14.45" fill="#7d8bc9"/><circle cx="14.5" cy="14.3" r="10.7" fill="#fff"/><path d="M3.30 14.30L6.10 14.30" stroke="#7d8bc9" stroke-width="1.7"/><path d="M6.58 6.38L8.56 8.36" stroke="#7d8bc9" stroke-width="1.7"/><path d="M14.50 3.10L14.50 5.90" stroke="#7d8bc9" stroke-width="1.7"/><path d="M22.42 6.38L20.44 8.36" stroke="#7d8bc9" stroke-width="1.7"/><path d="M25.70 14.30L22.90 14.30" stroke="#7d8bc9" stroke-width="1.7"/><path d="M4.15 10.01L5.54 10.59" stroke="#7d8bc9" stroke-width="1.3"/><path d="M10.21 3.95L10.79 5.34" stroke="#7d8bc9" stroke-width="1.3"/><path d="M18.79 3.95L18.21 5.34" stroke="#7d8bc9" stroke-width="1.3"/><path d="M24.85 10.01L23.46 10.59" stroke="#7d8bc9" stroke-width="1.3"/><path d="M4.15 18.59L5.54 18.01" stroke="#7d8bc9" stroke-width="1.3"/><path d="M24.85 18.59L23.46 18.01" stroke="#7d8bc9" stroke-width="1.3"/><path d="M6.6 24L8.3 19.7L9.2 18.9L10 19.4L10.4 20.8H18.6L19 19.4L19.8 18.9L20.7 19.7L22.4 24L14.5 27Z" fill="#7d8bc9"/><path d="M10.55 20.6A3.95 3.95 0 0 0 18.45 20.6" fill="none" stroke="#fff" stroke-width="1.25"/><path d="M14.5 14C15.7 16.4 17.45 18.5 17.45 20.5A2.95 2.95 0 0 1 11.55 20.5C11.55 18.5 13.3 16.4 14.5 14Z" fill="#7d8bc9"/></svg>
<span id="t33" class="t" style="left:308.50px;top:1170.64px;font-size:23.7px;line-height:23.7px;color:#2f2f2f;letter-spacing:0.838px;-webkit-text-stroke:0.35px #2f2f2f;">SMITH, SOL-Wtr Mtr</span>
<svg style="position:absolute;left:162px;top:1225.8000000000002px;overflow:visible" width="31" height="23.5" viewBox="0 0 31 23.5" ><g fill="none" stroke="#222" stroke-width="1.7" stroke-linejoin="round" stroke-linecap="round"><path d="M15.5 22H3.4A2.4 2.4 0 0 1 1 19.6V3.2A2.2 2.2 0 0 1 3.2 1H9.6L12.6 4H28.2A2.2 2.2 0 0 1 30.4 6.2V11"/><path d="M1 5.4H13.5"/><path d="M24.8 12.6V22.4M19.9 17.5H29.7"/></g></svg>
<span id="t34" class="t" style="left:243.20px;top:1226.64px;font-size:23.7px;line-height:23.7px;color:#5ba69f;letter-spacing:1.430px;-webkit-text-stroke:0.35px #5ba69f;">Template Route</span>
<svg style="position:absolute;left:162px;top:1281.8000000000002px;overflow:visible" width="31" height="23.5" viewBox="0 0 31 23.5" ><g fill="none" stroke="#222" stroke-width="1.7" stroke-linejoin="round" stroke-linecap="round"><path d="M15.5 22H3.4A2.4 2.4 0 0 1 1 19.6V3.2A2.2 2.2 0 0 1 3.2 1H9.6L12.6 4H28.2A2.2 2.2 0 0 1 30.4 6.2V11"/><path d="M1 5.4H13.5"/><path d="M24.8 12.6V22.4M19.9 17.5H29.7"/></g></svg>
<span id="t35" class="t" style="left:242.60px;top:1282.64px;font-size:23.7px;line-height:23.7px;color:#5ba69f;letter-spacing:1.377px;-webkit-text-stroke:0.35px #5ba69f;">Unassigned</span>
<div class="b" style="left:695.9px;top:699.9px;width:3.2px;height:620.9px;background:#e8e8e8;border-radius:2px 0 0 2px;"></div>
<div class="b" style="left:146px;top:1352.4px;width:524px;height:1.2px;background:#e6e6e6;"></div>
<span id="t36" class="t" style="left:160.00px;top:1398.80px;font-size:29.3px;line-height:29.3px;color:#2b2b2b;font-weight:700;letter-spacing:-0.185px;">Date Range Filter</span>
<div class="b" style="left:163.3px;top:1457.2px;width:521.5px;height:57.6px;background:#fff;border:1px solid #cfd2d6;border-radius:7px;box-sizing:border-box;"></div>
<div class="b" style="left:163.3px;top:1457.2px;width:143.7px;height:57.6px;background:#e9e9e9;border:1px solid #cfd2d6;border-radius:7px 0 0 7px;box-sizing:border-box;"></div>
<span id="t37" class="t" style="left:179.30px;top:1476.42px;font-size:20.3px;line-height:20.3px;color:#333;letter-spacing:1.025px;-webkit-text-stroke:0.3px #333;">From Date</span>
<span id="t38" class="t" style="left:331.00px;top:1476.42px;font-size:20.3px;line-height:20.3px;color:#4d4d4d;letter-spacing:1.850px;-webkit-text-stroke:0.25px #4d4d4d;">03-04-2022</span>
<svg style="position:absolute;left:645px;top:1474.1px;overflow:visible" width="25.6" height="24.9" viewBox="0 0 25 24.5" ><g fill="none" stroke="#9a9a9a" stroke-width="2.1" stroke-linecap="round"><rect x="1.1" y="4.4" width="22.8" height="19" rx="3.6"/><path d="M1.1 10.4H23.9" stroke-linecap="butt"/><path d="M5.4 .9V4M12.5 .9V4M19.6 .9V4"/></g></svg>
<div class="b" style="left:163.3px;top:1544.6px;width:521.5px;height:56.1px;background:#fff;border:1px solid #cfd2d6;border-radius:7px;box-sizing:border-box;"></div>
<div class="b" style="left:163.3px;top:1544.6px;width:143.7px;height:56.1px;background:#e9e9e9;border:1px solid #cfd2d6;border-radius:7px 0 0 7px;box-sizing:border-box;"></div>
<span id="t39" class="t" style="left:178.60px;top:1562.52px;font-size:20.3px;line-height:20.3px;color:#333;letter-spacing:0.916px;-webkit-text-stroke:0.3px #333;">To Date</span>
<span id="t40" class="t" style="left:331.00px;top:1562.52px;font-size:20.3px;line-height:20.3px;color:#4d4d4d;letter-spacing:1.850px;-webkit-text-stroke:0.25px #4d4d4d;">04-04-2022</span>
<svg style="position:absolute;left:645px;top:1560px;overflow:visible" width="25.6" height="24.9" viewBox="0 0 25 24.5" ><g fill="none" stroke="#9a9a9a" stroke-width="2.1" stroke-linecap="round"><rect x="1.1" y="4.4" width="22.8" height="19" rx="3.6"/><path d="M1.1 10.4H23.9" stroke-linecap="butt"/><path d="M5.4 .9V4M12.5 .9V4M19.6 .9V4"/></g></svg>
<div class="b" style="left:698px;top:249.6px;width:2px;height:450.4px;background:#dedede;"></div>
<div class="b" style="left:699px;top:700px;width:1px;height:959px;background:#e0e0e0;"></div>
<div class="b" style="left:700px;top:249.6px;width:2308px;height:86.9px;background:#dbe6f4;border-bottom:1.8px solid #edf2f9;box-sizing:border-box;"></div>
<div class="b" style="left:796.5px;top:249.6px;width:1.3px;height:85.9px;background:#b2b9c5;"></div>
<div class="b" style="left:2856.9px;top:249.6px;width:1.25px;height:85.9px;background:#b2b9c5;"></div>
<div class="b" style="left:733px;top:277.5px;width:28.4px;height:28.4px;background:#fff;border:3px solid #999;border-radius:4.5px;box-sizing:border-box;"></div>
<span id="t41" class="t" style="left:831.00px;top:282.08px;font-size:22px;line-height:22px;color:#181d1f;font-weight:700;letter-spacing:0.252px;">ReadingDate</span>
<span id="t42" class="t" style="left:1098.50px;top:282.08px;font-size:22px;line-height:22px;color:#181d1f;font-weight:700;letter-spacing:0.275px;">ReadingTime</span>
<span id="t43" class="t" style="left:1450.00px;top:282.08px;font-size:22px;line-height:22px;color:#181d1f;font-weight:700;letter-spacing:0.298px;">ReadingNumber</span>
<span id="t44" class="t" style="left:1786.50px;top:282.08px;font-size:22px;line-height:22px;color:#181d1f;font-weight:700;letter-spacing:0.280px;">TubingPressure</span>
<span id="t45" class="t" style="left:2119.00px;top:282.08px;font-size:22px;line-height:22px;color:#181d1f;font-weight:700;letter-spacing:0.169px;">Casing Pressure</span>
<span id="t46" class="t" style="left:2458.00px;top:282.08px;font-size:22px;line-height:22px;color:#181d1f;font-weight:700;letter-spacing:0.229px;">Surface Casing Pressure</span>
<div class="b" style="left:1064.5px;top:280px;width:2px;height:24.8px;background:#c5ccd7;"></div>
<div class="b" style="left:1415px;top:280px;width:2px;height:24.8px;background:#c5ccd7;"></div>
<div class="b" style="left:1719px;top:280px;width:2px;height:24.8px;background:#c5ccd7;"></div>
<div class="b" style="left:2052px;top:280px;width:2px;height:24.8px;background:#c5ccd7;"></div>
<div class="b" style="left:2390.5px;top:280px;width:2px;height:24.8px;background:#c5ccd7;"></div>
<div class="b" style="left:2819px;top:280px;width:2px;height:24.8px;background:#c5ccd7;"></div>
<svg style="position:absolute;left:1743.0px;top:281.8px;overflow:visible" width="25" height="25" viewBox="0 0 25 25" ><circle cx="12.5" cy="12.5" r="11.6" fill="#f1f5fa" stroke="#3b4658" stroke-width="1.5"/><path d="M8.2 7.6L13.1 12.5L8.2 17.4M12.6 7.6L17.5 12.5L12.6 17.4" fill="none" stroke="#3b4658" stroke-width="1.3"/></svg>
<svg style="position:absolute;left:2076.0px;top:281.8px;overflow:visible" width="25" height="25" viewBox="0 0 25 25" ><circle cx="12.5" cy="12.5" r="11.6" fill="#f1f5fa" stroke="#3b4658" stroke-width="1.5"/><path d="M8.2 7.6L13.1 12.5L8.2 17.4M12.6 7.6L17.5 12.5L12.6 17.4" fill="none" stroke="#3b4658" stroke-width="1.3"/></svg>
<svg style="position:absolute;left:2414.0px;top:281.8px;overflow:visible" width="25" height="25" viewBox="0 0 25 25" ><circle cx="12.5" cy="12.5" r="11.6" fill="#f1f5fa" stroke="#3b4658" stroke-width="1.5"/><path d="M8.2 7.6L13.1 12.5L8.2 17.4M12.6 7.6L17.5 12.5L12.6 17.4" fill="none" stroke="#3b4658" stroke-width="1.3"/></svg>
<div class="b" style="left:2836px;top:270px;width:20.8px;height:50px;overflow:hidden"><svg style="position:absolute;left:6.099999999999909px;top:11.800000000000011px;overflow:visible" width="25" height="25" viewBox="0 0 25 25" ><circle cx="12.5" cy="12.5" r="11.6" fill="#f1f5fa" stroke="#3b4658" stroke-width="1.5"/><path d="M8.2 7.6L13.1 12.5L8.2 17.4M12.6 7.6L17.5 12.5L12.6 17.4" fill="none" stroke="#3b4658" stroke-width="1.3"/></svg></div>
<span id="t47" class="t" style="left:2892.00px;top:282.08px;font-size:22px;line-height:22px;color:#181d1f;font-weight:700;letter-spacing:0.002px;">Actions</span>
<span class="t" style="left:2674px;top:1524.5px;font-size:49px;line-height:49px;color:#d5d5d5;letter-spacing:2px;-webkit-text-stroke:1.1px #d5d5d5">AG Grid</span>
<svg style="position:absolute;left:2879px;top:1522.5px" width="66" height="46" viewBox="0 0 66 46"><g fill="#d5d5d5"><rect x="5.4" y="0" width="38.4" height="10.2"/><rect x="22.8" y="4.7" width="43.2" height="10"/><rect x="12.3" y="20.5" width="33.8" height="9.4"/><rect x="0" y="34.5" width="31.5" height="10.4"/><path d="M22.8 14.7L12.3 20.5H30L40 14.7Z"/><path d="M12.3 29.9L0 34.5H20L31 29.9Z"/></g><rect x="22.8" y="4.7" width="21" height="5.5" fill="#c4c4c4"/></svg>
<span class="t" style="left:2670px;top:1586px;font-size:36px;line-height:36px;font-weight:700;color:#d0d0d0;-webkit-text-stroke:1.9px #d0d0d0;letter-spacing:1.2px;transform-origin:0 0;transform:scaleX(.73)">For Trial Use Only</span>
<div class="b" style="left:796.5px;top:337.7px;width:1.3px;height:71.58700000000003px;background:#b2b9c5;"></div>
<div class="b" style="left:2856.9px;top:337.7px;width:1.25px;height:71.58700000000003px;background:#b2b9c5;"></div>
<div class="b" style="left:733px;top:358.4px;width:28.4px;height:28.4px;background:#fff;border:3px solid #999;border-radius:4.5px;box-sizing:border-box;"></div>
<span id="t48" class="t" style="left:831.00px;top:363.99px;font-size:22.4px;line-height:22.4px;color:#181d1f;letter-spacing:1.106px;-webkit-text-stroke:0.2px #181d1f;">2022-03-30</span>
<span id="t49" class="t" style="left:1098.50px;top:363.99px;font-size:22.4px;line-height:22.4px;color:#181d1f;letter-spacing:0.127px;-webkit-text-stroke:0.2px #181d1f;">10:55 AM</span>
<span id="t50" class="t" style="left:1449.50px;top:363.99px;font-size:22.4px;line-height:22.4px;color:#181d1f;-webkit-text-stroke:0.2px #181d1f;">1</span>
<span id="t51" class="t" style="left:1752.00px;top:363.99px;font-size:22.4px;line-height:22.4px;color:#181d1f;letter-spacing:-0.700px;-webkit-text-stroke:0.2px #181d1f;">114</span>
<span id="t52" class="t" style="left:2087.00px;top:363.99px;font-size:22.4px;line-height:22.4px;color:#181d1f;letter-spacing:0.570px;-webkit-text-stroke:0.2px #181d1f;">500</span>
<span id="t53" class="t" style="left:2425.50px;top:363.99px;font-size:22.4px;line-height:22.4px;color:#181d1f;letter-spacing:0.594px;-webkit-text-stroke:0.2px #181d1f;">36</span>
<svg style="position:absolute;left:2899.2px;top:348.7px;overflow:visible" width="23.2" height="23.2" viewBox="0 0 23.2 23.2" ><g fill="none" stroke="#1f2329" stroke-width="2.2" stroke-linejoin="round" stroke-linecap="round"><path d="M11.5 2.1H4.4A3 3 0 0 0 1.4 5.1V18.8A3 3 0 0 0 4.4 21.8H18.4A3 3 0 0 0 21.4 18.8V11.6"/><path d="M8.4 14.6L18.6 2.6A1.9 1.9 0 0 1 21.6 5L11.4 15.4L8 16Z" stroke-width="2"/><path d="M16.9 4.4L19.9 7" stroke-width="1.6"/></g></svg>
<div class="b" style="left:700px;top:410.28700000000003px;width:2308px;height:73.78700000000003px;background:#f6f6f6;"></div>
<div class="b" style="left:796.5px;top:411.487px;width:1.3px;height:71.58700000000003px;background:#b2b9c5;"></div>
<div class="b" style="left:2856.9px;top:411.487px;width:1.25px;height:71.58700000000003px;background:#b2b9c5;"></div>
<div class="b" style="left:733px;top:432.187px;width:28.4px;height:28.4px;background:#fff;border:3px solid #999;border-radius:4.5px;box-sizing:border-box;"></div>
<span id="t54" class="t" style="left:831.00px;top:437.78px;font-size:22.4px;line-height:22.4px;color:#181d1f;letter-spacing:1.106px;-webkit-text-stroke:0.2px #181d1f;">2022-03-28</span>
<span id="t55" class="t" style="left:1098.50px;top:437.78px;font-size:22.4px;line-height:22.4px;color:#181d1f;letter-spacing:0.127px;-webkit-text-stroke:0.2px #181d1f;">10:55 AM</span>
<span id="t56" class="t" style="left:1449.50px;top:437.78px;font-size:22.4px;line-height:22.4px;color:#181d1f;-webkit-text-stroke:0.2px #181d1f;">1</span>
<span id="t57" class="t" style="left:1752.00px;top:437.78px;font-size:22.4px;line-height:22.4px;color:#181d1f;letter-spacing:-0.700px;-webkit-text-stroke:0.2px #181d1f;">114</span>
<span id="t58" class="t" style="left:2087.00px;top:437.78px;font-size:22.4px;line-height:22.4px;color:#181d1f;letter-spacing:0.570px;-webkit-text-stroke:0.2px #181d1f;">400</span>
<span id="t59" class="t" style="left:2425.50px;top:437.78px;font-size:22.4px;line-height:22.4px;color:#181d1f;letter-spacing:0.594px;-webkit-text-stroke:0.2px #181d1f;">46</span>
<svg style="position:absolute;left:2899.2px;top:422.487px;overflow:visible" width="23.2" height="23.2" viewBox="0 0 23.2 23.2" ><g fill="none" stroke="#1f2329" stroke-width="2.2" stroke-linejoin="round" stroke-linecap="round"><path d="M11.5 2.1H4.4A3 3 0 0 0 1.4 5.1V18.8A3 3 0 0 0 4.4 21.8H18.4A3 3 0 0 0 21.4 18.8V11.6"/><path d="M8.4 14.6L18.6 2.6A1.9 1.9 0 0 1 21.6 5L11.4 15.4L8 16Z" stroke-width="2"/><path d="M16.9 4.4L19.9 7" stroke-width="1.6"/></g></svg>
<div class="b" style="left:796.5px;top:485.274px;width:1.3px;height:71.58699999999997px;background:#b2b9c5;"></div>
<div class="b" style="left:2856.9px;top:485.274px;width:1.25px;height:71.58699999999997px;background:#b2b9c5;"></div>
<div class="b" style="left:733px;top:505.974px;width:28.4px;height:28.4px;background:#fff;border:3px solid #999;border-radius:4.5px;box-sizing:border-box;"></div>
<span id="t60" class="t" style="left:831.00px;top:511.56px;font-size:22.4px;line-height:22.4px;color:#181d1f;letter-spacing:1.106px;-webkit-text-stroke:0.2px #181d1f;">2022-03-26</span>
<span id="t61" class="t" style="left:1098.50px;top:511.56px;font-size:22.4px;line-height:22.4px;color:#181d1f;letter-spacing:0.127px;-webkit-text-stroke:0.2px #181d1f;">10:55 AM</span>
<span id="t62" class="t" style="left:1449.50px;top:511.56px;font-size:22.4px;line-height:22.4px;color:#181d1f;-webkit-text-stroke:0.2px #181d1f;">1</span>
<span id="t63" class="t" style="left:1752.00px;top:511.56px;font-size:22.4px;line-height:22.4px;color:#181d1f;letter-spacing:-0.700px;-webkit-text-stroke:0.2px #181d1f;">114</span>
<span id="t64" class="t" style="left:2087.00px;top:511.56px;font-size:22.4px;line-height:22.4px;color:#181d1f;letter-spacing:0.570px;-webkit-text-stroke:0.2px #181d1f;">350</span>
<span id="t65" class="t" style="left:2425.50px;top:511.56px;font-size:22.4px;line-height:22.4px;color:#181d1f;letter-spacing:-0.700px;-webkit-text-stroke:0.2px #181d1f;">41</span>
<svg style="position:absolute;left:2899.2px;top:496.274px;overflow:visible" width="23.2" height="23.2" viewBox="0 0 23.2 23.2" ><g fill="none" stroke="#1f2329" stroke-width="2.2" stroke-linejoin="round" stroke-linecap="round"><path d="M11.5 2.1H4.4A3 3 0 0 0 1.4 5.1V18.8A3 3 0 0 0 4.4 21.8H18.4A3 3 0 0 0 21.4 18.8V11.6"/><path d="M8.4 14.6L18.6 2.6A1.9 1.9 0 0 1 21.6 5L11.4 15.4L8 16Z" stroke-width="2"/><path d="M16.9 4.4L19.9 7" stroke-width="1.6"/></g></svg>
<div class="b" style="left:700px;top:557.861px;width:2308px;height:73.78700000000003px;background:#f6f6f6;"></div>
<div class="b" style="left:796.5px;top:559.061px;width:1.3px;height:71.58700000000003px;background:#b2b9c5;"></div>
<div class="b" style="left:2856.9px;top:559.061px;width:1.25px;height:71.58700000000003px;background:#b2b9c5;"></div>
<div class="b" style="left:733px;top:579.761px;width:28.4px;height:28.4px;background:#fff;border:3px solid #999;border-radius:4.5px;box-sizing:border-box;"></div>
<span id="t66" class="t" style="left:831.00px;top:585.35px;font-size:22.4px;line-height:22.4px;color:#181d1f;letter-spacing:1.106px;-webkit-text-stroke:0.2px #181d1f;">2022-03-24</span>
<span id="t67" class="t" style="left:1098.50px;top:585.35px;font-size:22.4px;line-height:22.4px;color:#181d1f;letter-spacing:0.127px;-webkit-text-stroke:0.2px #181d1f;">10:55 AM</span>
<span id="t68" class="t" style="left:1449.50px;top:585.35px;font-size:22.4px;line-height:22.4px;color:#181d1f;-webkit-text-stroke:0.2px #181d1f;">1</span>
<span id="t69" class="t" style="left:1752.00px;top:585.35px;font-size:22.4px;line-height:22.4px;color:#181d1f;letter-spacing:-0.700px;-webkit-text-stroke:0.2px #181d1f;">114</span>
<span id="t70" class="t" style="left:2087.00px;top:585.35px;font-size:22.4px;line-height:22.4px;color:#181d1f;letter-spacing:-0.700px;-webkit-text-stroke:0.2px #181d1f;">315</span>
<span id="t71" class="t" style="left:2425.50px;top:585.35px;font-size:22.4px;line-height:22.4px;color:#181d1f;letter-spacing:0.594px;-webkit-text-stroke:0.2px #181d1f;">49</span>
<svg style="position:absolute;left:2899.2px;top:570.061px;overflow:visible" width="23.2" height="23.2" viewBox="0 0 23.2 23.2" ><g fill="none" stroke="#1f2329" stroke-width="2.2" stroke-linejoin="round" stroke-linecap="round"><path d="M11.5 2.1H4.4A3 3 0 0 0 1.4 5.1V18.8A3 3 0 0 0 4.4 21.8H18.4A3 3 0 0 0 21.4 18.8V11.6"/><path d="M8.4 14.6L18.6 2.6A1.9 1.9 0 0 1 21.6 5L11.4 15.4L8 16Z" stroke-width="2"/><path d="M16.9 4.4L19.9 7" stroke-width="1.6"/></g></svg>
<div class="b" style="left:796.5px;top:632.8480000000001px;width:1.3px;height:71.58700000000003px;background:#b2b9c5;"></div>
<div class="b" style="left:2856.9px;top:632.8480000000001px;width:1.25px;height:71.58700000000003px;background:#b2b9c5;"></div>
<div class="b" style="left:733px;top:653.548px;width:28.4px;height:28.4px;background:#fff;border:3px solid #999;border-radius:4.5px;box-sizing:border-box;"></div>
<span id="t72" class="t" style="left:831.00px;top:659.14px;font-size:22.4px;line-height:22.4px;color:#181d1f;letter-spacing:1.106px;-webkit-text-stroke:0.2px #181d1f;">2022-03-22</span>
<span id="t73" class="t" style="left:1098.50px;top:659.14px;font-size:22.4px;line-height:22.4px;color:#181d1f;letter-spacing:0.127px;-webkit-text-stroke:0.2px #181d1f;">10:55 AM</span>
<span id="t74" class="t" style="left:1449.50px;top:659.14px;font-size:22.4px;line-height:22.4px;color:#181d1f;-webkit-text-stroke:0.2px #181d1f;">1</span>
<span id="t75" class="t" style="left:1752.00px;top:659.14px;font-size:22.4px;line-height:22.4px;color:#181d1f;letter-spacing:-0.700px;-webkit-text-stroke:0.2px #181d1f;">114</span>
<span id="t76" class="t" style="left:2087.00px;top:659.14px;font-size:22.4px;line-height:22.4px;color:#181d1f;letter-spacing:0.570px;-webkit-text-stroke:0.2px #181d1f;">385</span>
<span id="t77" class="t" style="left:2425.50px;top:659.14px;font-size:22.4px;line-height:22.4px;color:#181d1f;letter-spacing:0.594px;-webkit-text-stroke:0.2px #181d1f;">35</span>
<svg style="position:absolute;left:2899.2px;top:643.8480000000001px;overflow:visible" width="23.2" height="23.2" viewBox="0 0 23.2 23.2" ><g fill="none" stroke="#1f2329" stroke-width="2.2" stroke-linejoin="round" stroke-linecap="round"><path d="M11.5 2.1H4.4A3 3 0 0 0 1.4 5.1V18.8A3 3 0 0 0 4.4 21.8H18.4A3 3 0 0 0 21.4 18.8V11.6"/><path d="M8.4 14.6L18.6 2.6A1.9 1.9 0 0 1 21.6 5L11.4 15.4L8 16Z" stroke-width="2"/><path d="M16.9 4.4L19.9 7" stroke-width="1.6"/></g></svg>
<div class="b" style="left:700px;top:705.4350000000001px;width:2308px;height:73.78700000000003px;background:#f6f6f6;"></div>
<div class="b" style="left:796.5px;top:706.6350000000001px;width:1.3px;height:71.58700000000003px;background:#b2b9c5;"></div>
<div class="b" style="left:2856.9px;top:706.6350000000001px;width:1.25px;height:71.58700000000003px;background:#b2b9c5;"></div>
<div class="b" style="left:733px;top:727.335px;width:28.4px;height:28.4px;background:#fff;border:3px solid #999;border-radius:4.5px;box-sizing:border-box;"></div>
<span id="t78" class="t" style="left:831.00px;top:732.92px;font-size:22.4px;line-height:22.4px;color:#181d1f;letter-spacing:0.717px;-webkit-text-stroke:0.2px #181d1f;">2022-03-21</span>
<span id="t79" class="t" style="left:1098.50px;top:732.92px;font-size:22.4px;line-height:22.4px;color:#181d1f;letter-spacing:0.127px;-webkit-text-stroke:0.2px #181d1f;">10:55 AM</span>
<span id="t80" class="t" style="left:1449.50px;top:732.92px;font-size:22.4px;line-height:22.4px;color:#181d1f;-webkit-text-stroke:0.2px #181d1f;">1</span>
<span id="t81" class="t" style="left:1752.00px;top:732.92px;font-size:22.4px;line-height:22.4px;color:#181d1f;letter-spacing:-0.700px;-webkit-text-stroke:0.2px #181d1f;">135</span>
<span id="t82" class="t" style="left:2087.00px;top:732.92px;font-size:22.4px;line-height:22.4px;color:#181d1f;letter-spacing:0.570px;-webkit-text-stroke:0.2px #181d1f;">338</span>
<span id="t83" class="t" style="left:2425.50px;top:732.92px;font-size:22.4px;line-height:22.4px;color:#181d1f;letter-spacing:0.594px;-webkit-text-stroke:0.2px #181d1f;">45</span>
<svg style="position:absolute;left:2899.2px;top:717.6350000000001px;overflow:visible" width="23.2" height="23.2" viewBox="0 0 23.2 23.2" ><g fill="none" stroke="#1f2329" stroke-width="2.2" stroke-linejoin="round" stroke-linecap="round"><path d="M11.5 2.1H4.4A3 3 0 0 0 1.4 5.1V18.8A3 3 0 0 0 4.4 21.8H18.4A3 3 0 0 0 21.4 18.8V11.6"/><path d="M8.4 14.6L18.6 2.6A1.9 1.9 0 0 1 21.6 5L11.4 15.4L8 16Z" stroke-width="2"/><path d="M16.9 4.4L19.9 7" stroke-width="1.6"/></g></svg>
<div class="b" style="left:796.5px;top:780.422px;width:1.3px;height:71.58700000000003px;background:#b2b9c5;"></div>
<div class="b" style="left:2856.9px;top:780.422px;width:1.25px;height:71.58700000000003px;background:#b2b9c5;"></div>
<div class="b" style="left:733px;top:801.122px;width:28.4px;height:28.4px;background:#fff;border:3px solid #999;border-radius:4.5px;box-sizing:border-box;"></div>
<span id="t84" class="t" style="left:831.00px;top:806.71px;font-size:22.4px;line-height:22.4px;color:#181d1f;letter-spacing:1.106px;-webkit-text-stroke:0.2px #181d1f;">2022-03-20</span>
<span id="t85" class="t" style="left:1098.50px;top:806.71px;font-size:22.4px;line-height:22.4px;color:#181d1f;letter-spacing:0.127px;-webkit-text-stroke:0.2px #181d1f;">10:55 AM</span>
<span id="t86" class="t" style="left:1449.50px;top:806.71px;font-size:22.4px;line-height:22.4px;color:#181d1f;-webkit-text-stroke:0.2px #181d1f;">1</span>
<span id="t87" class="t" style="left:1752.00px;top:806.71px;font-size:22.4px;line-height:22.4px;color:#181d1f;letter-spacing:-0.700px;-webkit-text-stroke:0.2px #181d1f;">119</span>
<span id="t88" class="t" style="left:2087.00px;top:806.71px;font-size:22.4px;line-height:22.4px;color:#181d1f;letter-spacing:0.570px;-webkit-text-stroke:0.2px #181d1f;">339</span>
<span id="t89" class="t" style="left:2425.50px;top:806.71px;font-size:22.4px;line-height:22.4px;color:#181d1f;letter-spacing:0.594px;-webkit-text-stroke:0.2px #181d1f;">35</span>
<svg style="position:absolute;left:2899.2px;top:791.422px;overflow:visible" width="23.2" height="23.2" viewBox="0 0 23.2 23.2" ><g fill="none" stroke="#1f2329" stroke-width="2.2" stroke-linejoin="round" stroke-linecap="round"><path d="M11.5 2.1H4.4A3 3 0 0 0 1.4 5.1V18.8A3 3 0 0 0 4.4 21.8H18.4A3 3 0 0 0 21.4 18.8V11.6"/><path d="M8.4 14.6L18.6 2.6A1.9 1.9 0 0 1 21.6 5L11.4 15.4L8 16Z" stroke-width="2"/><path d="M16.9 4.4L19.9 7" stroke-width="1.6"/></g></svg>
<div class="b" style="left:700px;top:853.009px;width:2308px;height:73.78700000000003px;background:#f6f6f6;"></div>
<div class="b" style="left:796.5px;top:854.2090000000001px;width:1.3px;height:71.58700000000003px;background:#b2b9c5;"></div>
<div class="b" style="left:2856.9px;top:854.2090000000001px;width:1.25px;height:71.58700000000003px;background:#b2b9c5;"></div>
<div class="b" style="left:733px;top:874.909px;width:28.4px;height:28.4px;background:#fff;border:3px solid #999;border-radius:4.5px;box-sizing:border-box;"></div>
<span id="t90" class="t" style="left:831.00px;top:880.50px;font-size:22.4px;line-height:22.4px;color:#181d1f;letter-spacing:0.717px;-webkit-text-stroke:0.2px #181d1f;">2022-03-19</span>
<span id="t91" class="t" style="left:1098.50px;top:880.50px;font-size:22.4px;line-height:22.4px;color:#181d1f;letter-spacing:0.127px;-webkit-text-stroke:0.2px #181d1f;">10:55 AM</span>
<span id="t92" class="t" style="left:1449.50px;top:880.50px;font-size:22.4px;line-height:22.4px;color:#181d1f;-webkit-text-stroke:0.2px #181d1f;">1</span>
<span id="t93" class="t" style="left:1752.00px;top:880.50px;font-size:22.4px;line-height:22.4px;color:#181d1f;letter-spacing:-0.700px;-webkit-text-stroke:0.2px #181d1f;">140</span>
<span id="t94" class="t" style="left:2087.00px;top:880.50px;font-size:22.4px;line-height:22.4px;color:#181d1f;letter-spacing:0.570px;-webkit-text-stroke:0.2px #181d1f;">385</span>
<span id="t95" class="t" style="left:2425.50px;top:880.50px;font-size:22.4px;line-height:22.4px;color:#181d1f;letter-spacing:0.594px;-webkit-text-stroke:0.2px #181d1f;">47</span>
<svg style="position:absolute;left:2899.2px;top:865.2090000000001px;overflow:visible" width="23.2" height="23.2" viewBox="0 0 23.2 23.2" ><g fill="none" stroke="#1f2329" stroke-width="2.2" stroke-linejoin="round" stroke-linecap="round"><path d="M11.5 2.1H4.4A3 3 0 0 0 1.4 5.1V18.8A3 3 0 0 0 4.4 21.8H18.4A3 3 0 0 0 21.4 18.8V11.6"/><path d="M8.4 14.6L18.6 2.6A1.9 1.9 0 0 1 21.6 5L11.4 15.4L8 16Z" stroke-width="2"/><path d="M16.9 4.4L19.9 7" stroke-width="1.6"/></g></svg>
<div class="b" style="left:796.5px;top:927.9960000000001px;width:1.3px;height:71.58700000000003px;background:#b2b9c5;"></div>
<div class="b" style="left:2856.9px;top:927.9960000000001px;width:1.25px;height:71.58700000000003px;background:#b2b9c5;"></div>
<div class="b" style="left:733px;top:948.696px;width:28.4px;height:28.4px;background:#fff;border:3px solid #999;border-radius:4.5px;box-sizing:border-box;"></div>
<span id="t96" class="t" style="left:831.00px;top:954.28px;font-size:22.4px;line-height:22.4px;color:#181d1f;letter-spacing:0.717px;-webkit-text-stroke:0.2px #181d1f;">2022-03-18</span>
<span id="t97" class="t" style="left:1098.50px;top:954.28px;font-size:22.4px;line-height:22.4px;color:#181d1f;letter-spacing:0.127px;-webkit-text-stroke:0.2px #181d1f;">10:55 AM</span>
<span id="t98" class="t" style="left:1449.50px;top:954.28px;font-size:22.4px;line-height:22.4px;color:#181d1f;-webkit-text-stroke:0.2px #181d1f;">1</span>
<span id="t99" class="t" style="left:1752.00px;top:954.28px;font-size:22.4px;line-height:22.4px;color:#181d1f;letter-spacing:-0.700px;-webkit-text-stroke:0.2px #181d1f;">119</span>
<span id="t100" class="t" style="left:2087.00px;top:954.28px;font-size:22.4px;line-height:22.4px;color:#181d1f;letter-spacing:-0.700px;-webkit-text-stroke:0.2px #181d1f;">312</span>
<span id="t101" class="t" style="left:2425.50px;top:954.28px;font-size:22.4px;line-height:22.4px;color:#181d1f;letter-spacing:0.594px;-webkit-text-stroke:0.2px #181d1f;">37</span>
<svg style="position:absolute;left:2899.2px;top:938.9960000000001px;overflow:visible" width="23.2" height="23.2" viewBox="0 0 23.2 23.2" ><g fill="none" stroke="#1f2329" stroke-width="2.2" stroke-linejoin="round" stroke-linecap="round"><path d="M11.5 2.1H4.4A3 3 0 0 0 1.4 5.1V18.8A3 3 0 0 0 4.4 21.8H18.4A3 3 0 0 0 21.4 18.8V11.6"/><path d="M8.4 14.6L18.6 2.6A1.9 1.9 0 0 1 21.6 5L11.4 15.4L8 16Z" stroke-width="2"/><path d="M16.9 4.4L19.9 7" stroke-width="1.6"/></g></svg>
<div class="b" style="left:700px;top:1000.5830000000001px;width:2308px;height:73.78700000000003px;background:#f6f6f6;"></div>
<div class="b" style="left:796.5px;top:1001.7830000000001px;width:1.3px;height:71.58700000000003px;background:#b2b9c5;"></div>
<div class="b" style="left:2856.9px;top:1001.7830000000001px;width:1.25px;height:71.58700000000003px;background:#b2b9c5;"></div>
<div class="b" style="left:733px;top:1022.4830000000001px;width:28.4px;height:28.4px;background:#fff;border:3px solid #999;border-radius:4.5px;box-sizing:border-box;"></div>
<span id="t102" class="t" style="left:831.00px;top:1028.07px;font-size:22.4px;line-height:22.4px;color:#181d1f;letter-spacing:0.717px;-webkit-text-stroke:0.2px #181d1f;">2022-03-17</span>
<span id="t103" class="t" style="left:1098.50px;top:1028.07px;font-size:22.4px;line-height:22.4px;color:#181d1f;letter-spacing:0.127px;-webkit-text-stroke:0.2px #181d1f;">10:55 AM</span>
<span id="t104" class="t" style="left:1449.50px;top:1028.07px;font-size:22.4px;line-height:22.4px;color:#181d1f;-webkit-text-stroke:0.2px #181d1f;">1</span>
<span id="t105" class="t" style="left:1752.00px;top:1028.07px;font-size:22.4px;line-height:22.4px;color:#181d1f;letter-spacing:-0.700px;-webkit-text-stroke:0.2px #181d1f;">138</span>
<span id="t106" class="t" style="left:2087.00px;top:1028.07px;font-size:22.4px;line-height:22.4px;color:#181d1f;letter-spacing:0.570px;-webkit-text-stroke:0.2px #181d1f;">340</span>
<span id="t107" class="t" style="left:2425.50px;top:1028.07px;font-size:22.4px;line-height:22.4px;color:#181d1f;letter-spacing:0.594px;-webkit-text-stroke:0.2px #181d1f;">44</span>
<svg style="position:absolute;left:2899.2px;top:1012.7830000000001px;overflow:visible" width="23.2" height="23.2" viewBox="0 0 23.2 23.2" ><g fill="none" stroke="#1f2329" stroke-width="2.2" stroke-linejoin="round" stroke-linecap="round"><path d="M11.5 2.1H4.4A3 3 0 0 0 1.4 5.1V18.8A3 3 0 0 0 4.4 21.8H18.4A3 3 0 0 0 21.4 18.8V11.6"/><path d="M8.4 14.6L18.6 2.6A1.9 1.9 0 0 1 21.6 5L11.4 15.4L8 16Z" stroke-width="2"/><path d="M16.9 4.4L19.9 7" stroke-width="1.6"/></g></svg>
<div class="b" style="left:796.5px;top:1075.5700000000002px;width:1.3px;height:71.58700000000003px;background:#b2b9c5;"></div>
<div class="b" style="left:2856.9px;top:1075.5700000000002px;width:1.25px;height:71.58700000000003px;background:#b2b9c5;"></div>
<div class="b" style="left:733px;top:1096.2700000000002px;width:28.4px;height:28.4px;background:#fff;border:3px solid #999;border-radius:4.5px;box-sizing:border-box;"></div>
<span id="t108" class="t" style="left:831.00px;top:1101.86px;font-size:22.4px;line-height:22.4px;color:#181d1f;letter-spacing:0.717px;-webkit-text-stroke:0.2px #181d1f;">2022-03-16</span>
<span id="t109" class="t" style="left:1098.50px;top:1101.86px;font-size:22.4px;line-height:22.4px;color:#181d1f;letter-spacing:0.127px;-webkit-text-stroke:0.2px #181d1f;">10:55 AM</span>
<span id="t110" class="t" style="left:1449.50px;top:1101.86px;font-size:22.4px;line-height:22.4px;color:#181d1f;-webkit-text-stroke:0.2px #181d1f;">1</span>
<span id="t111" class="t" style="left:1752.00px;top:1101.86px;font-size:22.4px;line-height:22.4px;color:#181d1f;letter-spacing:-0.700px;-webkit-text-stroke:0.2px #181d1f;">140</span>
<span id="t112" class="t" style="left:2087.00px;top:1101.86px;font-size:22.4px;line-height:22.4px;color:#181d1f;letter-spacing:0.570px;-webkit-text-stroke:0.2px #181d1f;">352</span>
<span id="t113" class="t" style="left:2425.50px;top:1101.86px;font-size:22.4px;line-height:22.4px;color:#181d1f;letter-spacing:0.594px;-webkit-text-stroke:0.2px #181d1f;">43</span>
<svg style="position:absolute;left:2899.2px;top:1086.5700000000002px;overflow:visible" width="23.2" height="23.2" viewBox="0 0 23.2 23.2" ><g fill="none" stroke="#1f2329" stroke-width="2.2" stroke-linejoin="round" stroke-linecap="round"><path d="M11.5 2.1H4.4A3 3 0 0 0 1.4 5.1V18.8A3 3 0 0 0 4.4 21.8H18.4A3 3 0 0 0 21.4 18.8V11.6"/><path d="M8.4 14.6L18.6 2.6A1.9 1.9 0 0 1 21.6 5L11.4 15.4L8 16Z" stroke-width="2"/><path d="M16.9 4.4L19.9 7" stroke-width="1.6"/></g></svg>
<div class="b" style="left:700px;top:1148.1570000000002px;width:2308px;height:73.78700000000003px;background:#f6f6f6;"></div>
<div class="b" style="left:796.5px;top:1149.3570000000002px;width:1.3px;height:71.58700000000003px;background:#b2b9c5;"></div>
<div class="b" style="left:2856.9px;top:1149.3570000000002px;width:1.25px;height:71.58700000000003px;background:#b2b9c5;"></div>
<div class="b" style="left:733px;top:1170.0570000000002px;width:28.4px;height:28.4px;background:#fff;border:3px solid #999;border-radius:4.5px;box-sizing:border-box;"></div>
<span id="t114" class="t" style="left:831.00px;top:1175.65px;font-size:22.4px;line-height:22.4px;color:#181d1f;letter-spacing:0.717px;-webkit-text-stroke:0.2px #181d1f;">2022-03-15</span>
<span id="t115" class="t" style="left:1098.50px;top:1175.65px;font-size:22.4px;line-height:22.4px;color:#181d1f;letter-spacing:0.127px;-webkit-text-stroke:0.2px #181d1f;">10:55 AM</span>
<span id="t116" class="t" style="left:1449.50px;top:1175.65px;font-size:22.4px;line-height:22.4px;color:#181d1f;-webkit-text-stroke:0.2px #181d1f;">1</span>
<span id="t117" class="t" style="left:1752.00px;top:1175.65px;font-size:22.4px;line-height:22.4px;color:#181d1f;letter-spacing:-0.700px;-webkit-text-stroke:0.2px #181d1f;">122</span>
<span id="t118" class="t" style="left:2087.00px;top:1175.65px;font-size:22.4px;line-height:22.4px;color:#181d1f;letter-spacing:-0.700px;-webkit-text-stroke:0.2px #181d1f;">312</span>
<span id="t119" class="t" style="left:2425.50px;top:1175.65px;font-size:22.4px;line-height:22.4px;color:#181d1f;letter-spacing:0.594px;-webkit-text-stroke:0.2px #181d1f;">43</span>
<svg style="position:absolute;left:2899.2px;top:1160.3570000000002px;overflow:visible" width="23.2" height="23.2" viewBox="0 0 23.2 23.2" ><g fill="none" stroke="#1f2329" stroke-width="2.2" stroke-linejoin="round" stroke-linecap="round"><path d="M11.5 2.1H4.4A3 3 0 0 0 1.4 5.1V18.8A3 3 0 0 0 4.4 21.8H18.4A3 3 0 0 0 21.4 18.8V11.6"/><path d="M8.4 14.6L18.6 2.6A1.9 1.9 0 0 1 21.6 5L11.4 15.4L8 16Z" stroke-width="2"/><path d="M16.9 4.4L19.9 7" stroke-width="1.6"/></g></svg>
<div class="b" style="left:796.5px;top:1223.144px;width:1.3px;height:71.58700000000003px;background:#b2b9c5;"></div>
<div class="b" style="left:2856.9px;top:1223.144px;width:1.25px;height:71.58700000000003px;background:#b2b9c5;"></div>
<div class="b" style="left:733px;top:1243.844px;width:28.4px;height:28.4px;background:#fff;border:3px solid #999;border-radius:4.5px;box-sizing:border-box;"></div>
<span id="t120" class="t" style="left:831.00px;top:1249.43px;font-size:22.4px;line-height:22.4px;color:#181d1f;letter-spacing:0.717px;-webkit-text-stroke:0.2px #181d1f;">2022-03-14</span>
<span id="t121" class="t" style="left:1098.50px;top:1249.43px;font-size:22.4px;line-height:22.4px;color:#181d1f;letter-spacing:0.127px;-webkit-text-stroke:0.2px #181d1f;">10:55 AM</span>
<span id="t122" class="t" style="left:1449.50px;top:1249.43px;font-size:22.4px;line-height:22.4px;color:#181d1f;-webkit-text-stroke:0.2px #181d1f;">1</span>
<span id="t123" class="t" style="left:1752.00px;top:1249.43px;font-size:22.4px;line-height:22.4px;color:#181d1f;letter-spacing:-0.700px;-webkit-text-stroke:0.2px #181d1f;">112</span>
<span id="t124" class="t" style="left:2087.00px;top:1249.43px;font-size:22.4px;line-height:22.4px;color:#181d1f;letter-spacing:0.570px;-webkit-text-stroke:0.2px #181d1f;">320</span>
<span id="t125" class="t" style="left:2425.50px;top:1249.43px;font-size:22.4px;line-height:22.4px;color:#181d1f;letter-spacing:0.594px;-webkit-text-stroke:0.2px #181d1f;">40</span>
<svg style="position:absolute;left:2899.2px;top:1234.144px;overflow:visible" width="23.2" height="23.2" viewBox="0 0 23.2 23.2" ><g fill="none" stroke="#1f2329" stroke-width="2.2" stroke-linejoin="round" stroke-linecap="round"><path d="M11.5 2.1H4.4A3 3 0 0 0 1.4 5.1V18.8A3 3 0 0 0 4.4 21.8H18.4A3 3 0 0 0 21.4 18.8V11.6"/><path d="M8.4 14.6L18.6 2.6A1.9 1.9 0 0 1 21.6 5L11.4 15.4L8 16Z" stroke-width="2"/><path d="M16.9 4.4L19.9 7" stroke-width="1.6"/></g></svg>
<div class="b" style="left:700px;top:1295.7310000000002px;width:2308px;height:73.78700000000003px;background:#f6f6f6;"></div>
<div class="b" style="left:796.5px;top:1296.9310000000003px;width:1.3px;height:71.58700000000003px;background:#b2b9c5;"></div>
<div class="b" style="left:2856.9px;top:1296.9310000000003px;width:1.25px;height:71.58700000000003px;background:#b2b9c5;"></div>
<div class="b" style="left:733px;top:1317.6310000000003px;width:28.4px;height:28.4px;background:#fff;border:3px solid #999;border-radius:4.5px;box-sizing:border-box;"></div>
<span id="t126" class="t" style="left:831.00px;top:1323.22px;font-size:22.4px;line-height:22.4px;color:#181d1f;letter-spacing:0.717px;-webkit-text-stroke:0.2px #181d1f;">2022-03-13</span>
<span id="t127" class="t" style="left:1098.50px;top:1323.22px;font-size:22.4px;line-height:22.4px;color:#181d1f;letter-spacing:0.127px;-webkit-text-stroke:0.2px #181d1f;">10:55 AM</span>
<span id="t128" class="t" style="left:1449.50px;top:1323.22px;font-size:22.4px;line-height:22.4px;color:#181d1f;-webkit-text-stroke:0.2px #181d1f;">1</span>
<span id="t129" class="t" style="left:1752.00px;top:1323.22px;font-size:22.4px;line-height:22.4px;color:#181d1f;letter-spacing:-0.700px;-webkit-text-stroke:0.2px #181d1f;">116</span>
<span id="t130" class="t" style="left:2087.00px;top:1323.22px;font-size:22.4px;line-height:22.4px;color:#181d1f;letter-spacing:0.570px;-webkit-text-stroke:0.2px #181d1f;">324</span>
<span id="t131" class="t" style="left:2425.50px;top:1323.22px;font-size:22.4px;line-height:22.4px;color:#181d1f;letter-spacing:0.594px;-webkit-text-stroke:0.2px #181d1f;">39</span>
<svg style="position:absolute;left:2899.2px;top:1307.9310000000003px;overflow:visible" width="23.2" height="23.2" viewBox="0 0 23.2 23.2" ><g fill="none" stroke="#1f2329" stroke-width="2.2" stroke-linejoin="round" stroke-linecap="round"><path d="M11.5 2.1H4.4A3 3 0 0 0 1.4 5.1V18.8A3 3 0 0 0 4.4 21.8H18.4A3 3 0 0 0 21.4 18.8V11.6"/><path d="M8.4 14.6L18.6 2.6A1.9 1.9 0 0 1 21.6 5L11.4 15.4L8 16Z" stroke-width="2"/><path d="M16.9 4.4L19.9 7" stroke-width="1.6"/></g></svg>
<div class="b" style="left:796.5px;top:1370.718px;width:1.3px;height:71.58700000000003px;background:#b2b9c5;"></div>
<div class="b" style="left:2856.9px;top:1370.718px;width:1.25px;height:71.58700000000003px;background:#b2b9c5;"></div>
<div class="b" style="left:733px;top:1391.4180000000001px;width:28.4px;height:28.4px;background:#fff;border:3px solid #999;border-radius:4.5px;box-sizing:border-box;"></div>
<span id="t132" class="t" style="left:831.00px;top:1397.01px;font-size:22.4px;line-height:22.4px;color:#181d1f;letter-spacing:0.717px;-webkit-text-stroke:0.2px #181d1f;">2022-03-12</span>
<span id="t133" class="t" style="left:1098.50px;top:1397.01px;font-size:22.4px;line-height:22.4px;color:#181d1f;letter-spacing:0.127px;-webkit-text-stroke:0.2px #181d1f;">10:55 AM</span>
<span id="t134" class="t" style="left:1449.50px;top:1397.01px;font-size:22.4px;line-height:22.4px;color:#181d1f;-webkit-text-stroke:0.2px #181d1f;">1</span>
<span id="t135" class="t" style="left:1752.00px;top:1397.01px;font-size:22.4px;line-height:22.4px;color:#181d1f;letter-spacing:-0.700px;-webkit-text-stroke:0.2px #181d1f;">112</span>
<span id="t136" class="t" style="left:2087.00px;top:1397.01px;font-size:22.4px;line-height:22.4px;color:#181d1f;letter-spacing:0.570px;-webkit-text-stroke:0.2px #181d1f;">339</span>
<span id="t137" class="t" style="left:2425.50px;top:1397.01px;font-size:22.4px;line-height:22.4px;color:#181d1f;letter-spacing:0.594px;-webkit-text-stroke:0.2px #181d1f;">39</span>
<svg style="position:absolute;left:2899.2px;top:1381.718px;overflow:visible" width="23.2" height="23.2" viewBox="0 0 23.2 23.2" ><g fill="none" stroke="#1f2329" stroke-width="2.2" stroke-linejoin="round" stroke-linecap="round"><path d="M11.5 2.1H4.4A3 3 0 0 0 1.4 5.1V18.8A3 3 0 0 0 4.4 21.8H18.4A3 3 0 0 0 21.4 18.8V11.6"/><path d="M8.4 14.6L18.6 2.6A1.9 1.9 0 0 1 21.6 5L11.4 15.4L8 16Z" stroke-width="2"/><path d="M16.9 4.4L19.9 7" stroke-width="1.6"/></g></svg>
<div class="b" style="left:700px;top:1443.305px;width:2308px;height:73.78700000000003px;background:#f6f6f6;"></div>
<div class="b" style="left:796.5px;top:1444.505px;width:1.3px;height:71.58700000000003px;background:#b2b9c5;"></div>
<div class="b" style="left:2856.9px;top:1444.505px;width:1.25px;height:71.58700000000003px;background:#b2b9c5;"></div>
<div class="b" style="left:733px;top:1465.2050000000002px;width:28.4px;height:28.4px;background:#fff;border:3px solid #999;border-radius:4.5px;box-sizing:border-box;"></div>
<span id="t138" class="t" style="left:831.00px;top:1470.79px;font-size:22.4px;line-height:22.4px;color:#181d1f;letter-spacing:0.514px;-webkit-text-stroke:0.2px #181d1f;">2022-03-11</span>
<span id="t139" class="t" style="left:1098.50px;top:1470.79px;font-size:22.4px;line-height:22.4px;color:#181d1f;letter-spacing:0.127px;-webkit-text-stroke:0.2px #181d1f;">10:55 AM</span>
<span id="t140" class="t" style="left:1449.50px;top:1470.79px;font-size:22.4px;line-height:22.4px;color:#181d1f;-webkit-text-stroke:0.2px #181d1f;">1</span>
<span id="t141" class="t" style="left:1752.00px;top:1470.79px;font-size:22.4px;line-height:22.4px;color:#181d1f;letter-spacing:-0.700px;-webkit-text-stroke:0.2px #181d1f;">113</span>
<span id="t142" class="t" style="left:2087.00px;top:1470.79px;font-size:22.4px;line-height:22.4px;color:#181d1f;letter-spacing:-0.700px;-webkit-text-stroke:0.2px #181d1f;">313</span>
<span id="t143" class="t" style="left:2425.50px;top:1470.79px;font-size:22.4px;line-height:22.4px;color:#181d1f;letter-spacing:0.594px;-webkit-text-stroke:0.2px #181d1f;">44</span>
<svg style="position:absolute;left:2899.2px;top:1455.505px;overflow:visible" width="23.2" height="23.2" viewBox="0 0 23.2 23.2" ><g fill="none" stroke="#1f2329" stroke-width="2.2" stroke-linejoin="round" stroke-linecap="round"><path d="M11.5 2.1H4.4A3 3 0 0 0 1.4 5.1V18.8A3 3 0 0 0 4.4 21.8H18.4A3 3 0 0 0 21.4 18.8V11.6"/><path d="M8.4 14.6L18.6 2.6A1.9 1.9 0 0 1 21.6 5L11.4 15.4L8 16Z" stroke-width="2"/><path d="M16.9 4.4L19.9 7" stroke-width="1.6"/></g></svg>
<div class="b" style="left:796.5px;top:1518.2920000000001px;width:1.3px;height:54.30799999999981px;background:#b2b9c5;"></div>
<div class="b" style="left:2856.9px;top:1518.2920000000001px;width:1.25px;height:54.30799999999981px;background:#b2b9c5;"></div>
<div class="b" style="left:733px;top:1538.9920000000002px;width:28.4px;height:28.4px;background:#fff;border:3px solid #999;border-radius:4.5px;box-sizing:border-box;"></div>
<span id="t144" class="t" style="left:831.00px;top:1544.58px;font-size:22.4px;line-height:22.4px;color:#181d1f;letter-spacing:0.717px;-webkit-text-stroke:0.2px #181d1f;">2022-03-10</span>
<span id="t145" class="t" style="left:1098.50px;top:1544.58px;font-size:22.4px;line-height:22.4px;color:#181d1f;letter-spacing:0.127px;-webkit-text-stroke:0.2px #181d1f;">10:55 AM</span>
<span id="t146" class="t" style="left:1449.50px;top:1544.58px;font-size:22.4px;line-height:22.4px;color:#181d1f;-webkit-text-stroke:0.2px #181d1f;">1</span>
<span id="t147" class="t" style="left:1752.00px;top:1544.58px;font-size:22.4px;line-height:22.4px;color:#181d1f;letter-spacing:-0.700px;-webkit-text-stroke:0.2px #181d1f;">119</span>
<span id="t148" class="t" style="left:2087.00px;top:1544.58px;font-size:22.4px;line-height:22.4px;color:#181d1f;letter-spacing:0.570px;-webkit-text-stroke:0.2px #181d1f;">363</span>
<span id="t149" class="t" style="left:2425.50px;top:1544.58px;font-size:22.4px;line-height:22.4px;color:#181d1f;letter-spacing:0.594px;-webkit-text-stroke:0.2px #181d1f;">42</span>
<svg style="position:absolute;left:2899.2px;top:1529.2920000000001px;overflow:visible" width="23.2" height="23.2" viewBox="0 0 23.2 23.2" ><g fill="none" stroke="#1f2329" stroke-width="2.2" stroke-linejoin="round" stroke-linecap="round"><path d="M11.5 2.1H4.4A3 3 0 0 0 1.4 5.1V18.8A3 3 0 0 0 4.4 21.8H18.4A3 3 0 0 0 21.4 18.8V11.6"/><path d="M8.4 14.6L18.6 2.6A1.9 1.9 0 0 1 21.6 5L11.4 15.4L8 16Z" stroke-width="2"/><path d="M16.9 4.4L19.9 7" stroke-width="1.6"/></g></svg>
<span id="pg1" class="t" style="left:733px;top:1605.73px;font-size:23px;line-height:23px;color:#181d1f;letter-spacing:1.2px"><b>1</b> to <b>20</b> of <b>23</b></span>
<svg style="position:absolute;left:2525.6px;top:1604.8px;overflow:visible" width="20" height="20" viewBox="0 0 20 20" ><path d="M3.2 2.6V17.4M15 2.6L7.8 10L15 17.4" fill="none" stroke="#8b8f94" stroke-width="2.3"/></svg>
<svg style="position:absolute;left:2575.5px;top:1605px;overflow:visible" width="20" height="20" viewBox="0 0 20 20" ><path d="M13.4 2.2L5.8 10L13.4 17.8" fill="none" stroke="#8b8f94" stroke-width="2.3"/></svg>
<span id="pg2" class="t" style="left:2621.5px;top:1605.73px;font-size:23px;line-height:23px;color:#181d1f;letter-spacing:.5px">Page <b>1</b> of <b>2</b></span>
<svg style="position:absolute;left:2768.5px;top:1605px;overflow:visible" width="20" height="20" viewBox="0 0 20 20" ><path d="M6.6 2.2L14.2 10L6.6 17.8" fill="none" stroke="#181d1f" stroke-width="2.3"/></svg>
<svg style="position:absolute;left:2820px;top:1605px;overflow:visible" width="20" height="20" viewBox="0 0 20 20" ><path d="M16.8 2.6V17.4M5 2.6L12.2 10L5 17.4" fill="none" stroke="#181d1f" stroke-width="2.3"/></svg>
</div></body></html>
